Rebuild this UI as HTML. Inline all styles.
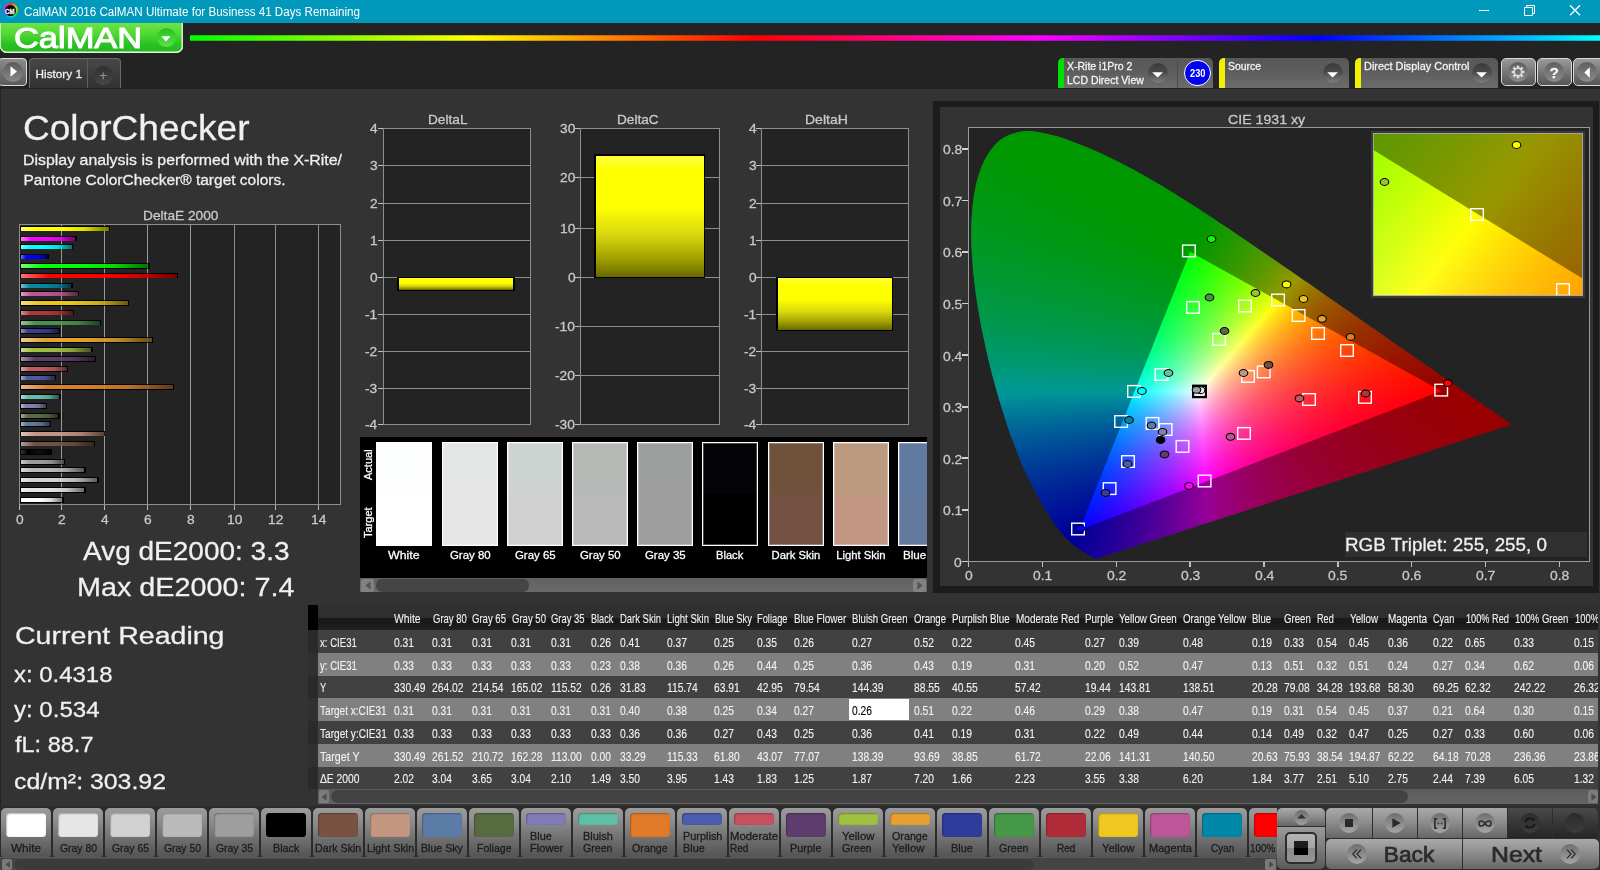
<!DOCTYPE html>
<html lang="en"><head><meta charset="utf-8"><title>CalMAN 2016 CalMAN Ultimate for Business</title>
<style>
html,body{margin:0;padding:0;background:#333}
body{width:1600px;height:870px;position:relative;overflow:hidden;font-family:"Liberation Sans",sans-serif;color:#fff}
#app{position:absolute;left:0;top:0;width:1600px;height:870px;overflow:hidden;background:#333;will-change:transform}
div,.a{position:absolute}
svg{display:block;overflow:visible}
.t{position:absolute;white-space:nowrap;line-height:1;transform-origin:0 0;color:#fff;-webkit-text-stroke:.28px}
#tbl .t{-webkit-text-stroke:.12px}
</style></head>
<body>
<div id="app">
<div style="left:0;top:89px;width:1px;height:781px;background:#242424"></div>
<div style="left:0px;top:0px;width:1600px;height:23px;background:#0099bc;"></div>
<div style="left:2.5px;top:3px;width:15px;height:15px;border-radius:50%;background:conic-gradient(#f33,#fc0,#3d3,#0cf,#36f,#c3f,#f33);"></div>
<div style="left:4.5px;top:5px;width:11px;height:11px;border-radius:50%;background:#000;"></div>
<span class="t" style="left:5.35px;top:8px;font-size:7px;transform:scaleX(0.8723);font-weight:700;">CM</span>
<span class="t" style="left:23.60px;top:6px;font-size:12px;transform:scaleX(0.9670);-webkit-text-stroke:0;">CalMAN 2016 CalMAN Ultimate for Business 41 Days Remaining</span>
<svg class="a" style="left:1470px;top:0" width="130" height="23" viewBox="0 0 130 23" fill="none" stroke="#fff" stroke-width="1"><path d="M9 10.5h10"/><path d="M54.5 7.5h8v8h-8z"/><path d="M56.5 7.5v-2h8v8h-2"/><path d="M100 5.2l10 10M110 5.2l-10 10" stroke-width="1.25"/></svg>
<div style="left:0px;top:23px;width:1600px;height:66px;background:#232323;"></div>
<div style="left:190px;top:35px;width:1410px;height:6px;background:linear-gradient(90deg,#00ff00 0%,#80ff00 10%,#ffff00 20%,#ff8000 30%,#ff0000 40%,#ff0080 50%,#ff00ff 60%,#8000ff 70%,#0000ff 80%,#0080ff 90%,#00ffff 100%);border-radius:0;box-shadow:none;"></div>
<div style="left:190px;top:34px;width:1410px;height:2px;background:linear-gradient(#232323,rgba(35,35,35,0));"></div>
<div style="left:190px;top:40px;width:1410px;height:2px;background:linear-gradient(rgba(35,35,35,0),#232323);"></div>
<div style="left:0px;top:23px;width:183px;height:30px;background:linear-gradient(#6fe345 0%,#52d934 35%,#2bc322 70%,#1fb71d 100%);border-radius:0 0 7px 7px;box-shadow:inset 0 -1.5px 0 #e6f5e0,inset -1.5px 0 0 #d0f0c8,inset 1px 0 0 #d0f0c8;"></div>
<span class="t" style="left:13.70px;top:23px;font-size:30px;transform:scaleX(1.1478);-webkit-text-stroke:1.1px #fff;text-shadow:0 1px 1px rgba(0,0,0,.2);">CalMAN</span>
<div style="left:156.5px;top:28px;width:19px;height:19px;border-radius:50%;background:linear-gradient(#1fc31f,#5fe04a);"></div>
<svg class="a" style="left:161px;top:35.5px" width="10" height="6" viewBox="0 0 10 6"><path d="M0.4 0.3h9.2L5 5.6z" fill="#fff"/></svg>
<div style="left:-2px;top:58px;width:29px;height:28px;border-radius:4px;background:linear-gradient(#8c8c8c,#5a5a5a);border:1px solid #ddd;box-sizing:border-box;box-shadow:0 0 0 1px #222;"></div>
<div style="left:3px;top:62px;width:20px;height:20px;border-radius:50%;background:linear-gradient(#5a5a5a,#8a8a8a);"></div>
<svg class="a" style="left:9.5px;top:66px" width="8" height="11" viewBox="0 0 8 11"><path d="M0.5 0.3L7 5.5L0.5 10.7z" fill="#fff"/></svg>
<div style="left:28.8px;top:58px;width:92.2px;height:30px;border-radius:4px 4px 0 0;background:linear-gradient(#484848,#333 90%);border:1px solid #6a6a6a;border-bottom:0;box-sizing:border-box;"></div>
<div style="left:86.9px;top:59px;width:1px;height:29px;background:#5e5e5e;"></div>
<span class="t" style="left:35.60px;top:68px;font-size:11.75px;color:#f2f2f2;">History 1</span>
<div style="left:94px;top:65.5px;width:19px;height:19px;border-radius:50%;background:linear-gradient(#2f2f2f,#474747);"></div>
<span class="t" style="left:99.50px;top:69px;font-size:13px;color:#8a8a8a;">+</span>
<div style="left:1058px;top:58px;width:154.5px;height:30px;border-radius:5px 5px 0 0;background:linear-gradient(#585858,#5c5c5c 40%,#6c6c6c);overflow:hidden;"><div class="a" style="left:0;top:0;width:5.5px;height:30px;background:#00e000"></div></div><span class="t" style="left:1067.00px;top:61px;font-size:10.5px;color:#f4f4f4;">X-Rite i1Pro 2</span><span class="t" style="left:1067.00px;top:75px;font-size:10.5px;color:#f4f4f4;">LCD Direct View</span><div style="left:1147.5px;top:63px;width:20px;height:20px;border-radius:50%;background:linear-gradient(#3a3a3a,#4a4a4a 45%,#7e7e7e);"></div><svg class="a" style="left:1151.9px;top:71.7px" width="11.2" height="5.6" viewBox="0 0 11.2 5.6"><path d="M0.2 0.2h10.8L5.6 5.5z" fill="#fff"/></svg>
<div style="left:1176.5px;top:61px;width:1.5px;height:27px;background:#4c4c4c;"></div>
<div style="left:1184.3px;top:59.9px;width:26.4px;height:26.4px;border-radius:50%;background:#0000f2;border:1.1px solid #fff;box-sizing:border-box;"></div>
<span class="t" style="left:1189.90px;top:69px;font-size:10px;transform:scaleX(0.9228);font-weight:700;-webkit-text-stroke:0;">230</span>
<div style="left:1219px;top:58px;width:129.5px;height:30px;border-radius:5px 5px 0 0;background:linear-gradient(#585858,#5c5c5c 40%,#6c6c6c);overflow:hidden;"><div class="a" style="left:0;top:0;width:5.5px;height:30px;background:#f2f200"></div></div><span class="t" style="left:1228.00px;top:61px;font-size:10.5px;transform:scaleX(0.9915);color:#f4f4f4;">Source</span><div style="left:1322.5px;top:63px;width:20px;height:20px;border-radius:50%;background:linear-gradient(#3a3a3a,#4a4a4a 45%,#7e7e7e);"></div><svg class="a" style="left:1326.9px;top:71.7px" width="11.2" height="5.6" viewBox="0 0 11.2 5.6"><path d="M0.2 0.2h10.8L5.6 5.5z" fill="#fff"/></svg>
<div style="left:1355px;top:58px;width:142.5px;height:30px;border-radius:5px 5px 0 0;background:linear-gradient(#585858,#5c5c5c 40%,#6c6c6c);overflow:hidden;"><div class="a" style="left:0;top:0;width:5.5px;height:30px;background:#f2f200"></div></div><span class="t" style="left:1364.00px;top:61px;font-size:11px;transform:scaleX(0.9918);color:#f4f4f4;">Direct Display Control</span><div style="left:1472px;top:63px;width:20px;height:20px;border-radius:50%;background:linear-gradient(#3a3a3a,#4a4a4a 45%,#7e7e7e);"></div><svg class="a" style="left:1476.4px;top:71.7px" width="11.2" height="5.6" viewBox="0 0 11.2 5.6"><path d="M0.2 0.2h10.8L5.6 5.5z" fill="#fff"/></svg>
<div style="left:1501px;top:58px;width:34.5px;height:28px;border-radius:5px;background:linear-gradient(#9a9a9a,#555);border:1px solid #d8d8d8;box-sizing:border-box;"></div><div style="left:1508.25px;top:62px;width:20px;height:20px;border-radius:50%;background:linear-gradient(#5e5e5e,#8c8c8c);"></div>
<svg class="a" style="left:1510px;top:64px" width="16" height="16" viewBox="-8 -8 16 16"><g fill="#ddd"><rect x="-1.25" y="-6.4" width="2.5" height="2.6" transform="rotate(0)"/><rect x="-1.25" y="-6.4" width="2.5" height="2.6" transform="rotate(45)"/><rect x="-1.25" y="-6.4" width="2.5" height="2.6" transform="rotate(90)"/><rect x="-1.25" y="-6.4" width="2.5" height="2.6" transform="rotate(135)"/><rect x="-1.25" y="-6.4" width="2.5" height="2.6" transform="rotate(180)"/><rect x="-1.25" y="-6.4" width="2.5" height="2.6" transform="rotate(225)"/><rect x="-1.25" y="-6.4" width="2.5" height="2.6" transform="rotate(270)"/><rect x="-1.25" y="-6.4" width="2.5" height="2.6" transform="rotate(315)"/></g><circle r="3.7" fill="none" stroke="#ddd" stroke-width="1.5"/></svg>
<div style="left:1537px;top:58px;width:34.5px;height:28px;border-radius:5px;background:linear-gradient(#9a9a9a,#555);border:1px solid #d8d8d8;box-sizing:border-box;"></div><div style="left:1544.25px;top:62px;width:20px;height:20px;border-radius:50%;background:linear-gradient(#5e5e5e,#8c8c8c);"></div>
<span class="t" style="left:1549.47px;top:65px;font-size:15.5px;color:#f4f4f4;font-weight:700;">?</span>
<div style="left:1573px;top:58px;width:37px;height:28px;border-radius:5px;background:linear-gradient(#9a9a9a,#555);border:1px solid #d8d8d8;box-sizing:border-box;"></div><div style="left:1577px;top:62px;width:20px;height:20px;border-radius:50%;background:linear-gradient(#5e5e5e,#8c8c8c);"></div>
<svg class="a" style="left:1583.6px;top:66.6px" width="6" height="11" viewBox="0 0 6 11"><path d="M5.8 0.3L0.3 5.5L5.8 10.7z" fill="#fff"/></svg>
<span class="t" style="left:23.30px;top:111px;font-size:35.75px;transform:scaleX(1.0363);color:#f0f0f0;">ColorChecker</span>
<span class="t" style="left:23.40px;top:152px;font-size:15.5px;transform:scaleX(1.0258);color:#f0f0f0;">Display analysis is performed with the X-Rite/</span>
<span class="t" style="left:23.40px;top:172px;font-size:15.5px;color:#f0f0f0;">Pantone ColorChecker® target colors.</span>
<span class="t" style="left:142.55px;top:209px;font-size:13.5px;transform:scaleX(1.0160);color:#c9c9c9;">DeltaE 2000</span>
<div style="left:19px;top:224px;width:322px;height:281px;background:#232323;border:1px solid #8e8e8e;box-sizing:border-box;"></div>
<div style="left:61px;top:225px;width:1px;height:279px;background:#8e8e8e;"></div>
<div style="left:104px;top:225px;width:1px;height:279px;background:#8e8e8e;"></div>
<div style="left:147px;top:225px;width:1px;height:279px;background:#8e8e8e;"></div>
<div style="left:190px;top:225px;width:1px;height:279px;background:#8e8e8e;"></div>
<div style="left:234px;top:225px;width:1px;height:279px;background:#8e8e8e;"></div>
<div style="left:275px;top:225px;width:1px;height:279px;background:#8e8e8e;"></div>
<div style="left:318px;top:225px;width:1px;height:279px;background:#8e8e8e;"></div>
<div style="left:19px;top:505px;width:1.2px;height:5px;background:#b8b8b8;"></div>
<span class="t" style="left:15.97px;top:513px;font-size:13px;transform:scaleX(1.0600);color:#c9c9c9;">0</span>
<div style="left:61px;top:505px;width:1.2px;height:5px;background:#b8b8b8;"></div>
<span class="t" style="left:57.97px;top:513px;font-size:13px;transform:scaleX(1.0600);color:#c9c9c9;">2</span>
<div style="left:104px;top:505px;width:1.2px;height:5px;background:#b8b8b8;"></div>
<span class="t" style="left:100.97px;top:513px;font-size:13px;transform:scaleX(1.0600);color:#c9c9c9;">4</span>
<div style="left:147px;top:505px;width:1.2px;height:5px;background:#b8b8b8;"></div>
<span class="t" style="left:143.97px;top:513px;font-size:13px;transform:scaleX(1.0600);color:#c9c9c9;">6</span>
<div style="left:190px;top:505px;width:1.2px;height:5px;background:#b8b8b8;"></div>
<span class="t" style="left:186.97px;top:513px;font-size:13px;transform:scaleX(1.0600);color:#c9c9c9;">8</span>
<div style="left:234px;top:505px;width:1.2px;height:5px;background:#b8b8b8;"></div>
<span class="t" style="left:227.13px;top:513px;font-size:13px;transform:scaleX(1.0600);color:#c9c9c9;">10</span>
<div style="left:275px;top:505px;width:1.2px;height:5px;background:#b8b8b8;"></div>
<span class="t" style="left:268.13px;top:513px;font-size:13px;transform:scaleX(1.0600);color:#c9c9c9;">12</span>
<div style="left:318px;top:505px;width:1.2px;height:5px;background:#b8b8b8;"></div>
<span class="t" style="left:311.13px;top:513px;font-size:13px;transform:scaleX(1.0600);color:#c9c9c9;">14</span>
<div style="left:20px;top:225.55px;width:90.27px;height:5.9px;background:#000;"></div>
<div style="left:20.5px;top:226.5px;width:88.47px;height:4px;background:linear-gradient(90deg,#ffff73 0,#ffff00 18%,#ffff00 45%,#e0e000 72%,#737300 100%);"></div>
<div style="left:20px;top:235.55px;width:56.537px;height:5.9px;background:#000;"></div>
<div style="left:20.5px;top:236.5px;width:54.737px;height:4px;background:linear-gradient(90deg,#ff73ff 0,#ff00ff 18%,#ff00ff 45%,#e000e0 72%,#730073 100%);"></div>
<div style="left:20px;top:243.55px;width:52.9075px;height:5.9px;background:#000;"></div>
<div style="left:20.5px;top:244.5px;width:51.1075px;height:4px;background:linear-gradient(90deg,#73ffff 0,#00ffff 18%,#00ffff 45%,#00e0e0 72%,#007373 100%);"></div>
<div style="left:20px;top:253.55px;width:28.782px;height:5.9px;background:#000;"></div>
<div style="left:20.5px;top:254.5px;width:26.982px;height:4px;background:linear-gradient(90deg,#7373ff 0,#0000ff 18%,#0000ff 45%,#0000e0 72%,#000073 100%);"></div>
<div style="left:20px;top:262.95px;width:129.768px;height:5.9px;background:#000;"></div>
<div style="left:20.5px;top:263.9px;width:127.968px;height:4px;background:linear-gradient(90deg,#73ff73 0,#00ff00 18%,#00ff00 45%,#00e000 72%,#007300 100%);"></div>
<div style="left:20px;top:272.55px;width:158.376px;height:5.9px;background:#000;"></div>
<div style="left:20.5px;top:273.5px;width:156.577px;height:4px;background:linear-gradient(90deg,#ff7373 0,#ff0000 18%,#ff0000 45%,#e00000 72%,#730000 100%);"></div>
<div style="left:20px;top:282.55px;width:52.694px;height:5.9px;background:#000;"></div>
<div style="left:20.5px;top:283.5px;width:50.894px;height:4px;background:linear-gradient(90deg,#77bccb 0,#0885a1 18%,#0885a1 45%,#07758e 72%,#043c48 100%);"></div>
<div style="left:20px;top:290.55px;width:59.3125px;height:5.9px;background:#000;"></div>
<div style="left:20.5px;top:291.5px;width:57.5125px;height:4px;background:linear-gradient(90deg,#daa2c5 0,#bb5695 18%,#bb5695 45%,#a54c83 72%,#542743 100%);"></div>
<div style="left:20px;top:300.15px;width:109.485px;height:5.9px;background:#000;"></div>
<div style="left:20.5px;top:301.1px;width:107.685px;height:4px;background:linear-gradient(90deg,#f2e084 0,#e7c71f 18%,#e7c71f 45%,#cbaf1b 72%,#685a0e 100%);"></div>
<div style="left:20px;top:309.55px;width:54.1885px;height:5.9px;background:#000;"></div>
<div style="left:20.5px;top:310.5px;width:52.3885px;height:4px;background:linear-gradient(90deg,#d39094 0,#af363c 18%,#af363c 45%,#9a3035 72%,#4f181b 100%);"></div>
<div style="left:20px;top:319.55px;width:81.0895px;height:5.9px;background:#000;"></div>
<div style="left:20.5px;top:320.5px;width:79.2895px;height:4px;background:linear-gradient(90deg,#99c49b 0,#469449 18%,#469449 45%,#3e8240 72%,#204321 100%);"></div>
<div style="left:20px;top:327.65px;width:39.884px;height:5.9px;background:#000;"></div>
<div style="left:20.5px;top:328.6px;width:38.084px;height:4px;background:linear-gradient(90deg,#9294c5 0,#383d96 18%,#383d96 45%,#313684 72%,#191b44 100%);"></div>
<div style="left:20px;top:337.45px;width:132.97px;height:5.9px;background:#000;"></div>
<div style="left:20.5px;top:338.4px;width:131.17px;height:4px;background:linear-gradient(90deg,#eecc8c 0,#e0a32e 18%,#e0a32e 45%,#c58f28 72%,#654915 100%);"></div>
<div style="left:20px;top:346.55px;width:72.763px;height:5.9px;background:#000;"></div>
<div style="left:20.5px;top:347.5px;width:70.963px;height:4px;background:linear-gradient(90deg,#c9da96 0,#9dbc40 18%,#9dbc40 45%,#8aa538 72%,#47551d 100%);"></div>
<div style="left:20px;top:356.45px;width:76.3925px;height:5.9px;background:#000;"></div>
<div style="left:20.5px;top:357.4px;width:74.5925px;height:4px;background:linear-gradient(90deg,#a694ae 0,#5e3c6c 18%,#5e3c6c 45%,#53355f 72%,#2a1b31 100%);"></div>
<div style="left:20px;top:366.05px;width:48.2105px;height:5.9px;background:#000;"></div>
<div style="left:20.5px;top:367px;width:46.4105px;height:4px;background:linear-gradient(90deg,#dda4a9 0,#c15a63 18%,#c15a63 45%,#aa4f57 72%,#57282d 100%);"></div>
<div style="left:20px;top:374.55px;width:36.041px;height:5.9px;background:#000;"></div>
<div style="left:20.5px;top:375.5px;width:34.241px;height:4px;background:linear-gradient(90deg,#9fa5ce 0,#505ba6 18%,#505ba6 45%,#465092 72%,#24294b 100%);"></div>
<div style="left:20px;top:384.15px;width:154.32px;height:5.9px;background:#000;"></div>
<div style="left:20.5px;top:385.1px;width:152.52px;height:4px;background:linear-gradient(90deg,#e8b88b 0,#d67e2c 18%,#d67e2c 45%,#bc6f27 72%,#603914 100%);"></div>
<div style="left:20px;top:393.55px;width:40.5245px;height:5.9px;background:#000;"></div>
<div style="left:20.5px;top:394.5px;width:38.7245px;height:4px;background:linear-gradient(90deg,#abdbd0 0,#67bdaa 18%,#67bdaa 45%,#5ba696 72%,#2e554c 100%);"></div>
<div style="left:20px;top:403.3px;width:27.2875px;height:5.9px;background:#000;"></div>
<div style="left:20.5px;top:404.25px;width:25.4875px;height:4px;background:linear-gradient(90deg,#bcb9d4 0,#8580b1 18%,#8580b1 45%,#75719c 72%,#3c3a50 100%);"></div>
<div style="left:20px;top:412.65px;width:39.6705px;height:5.9px;background:#000;"></div>
<div style="left:20.5px;top:413.6px;width:37.8705px;height:4px;background:linear-gradient(90deg,#a3ae98 0,#576c43 18%,#576c43 45%,#4d5f3b 72%,#27311e 100%);"></div>
<div style="left:20px;top:421.45px;width:31.1305px;height:5.9px;background:#000;"></div>
<div style="left:20.5px;top:422.4px;width:29.3305px;height:4px;background:linear-gradient(90deg,#a9b6c9 0,#627a9d 18%,#627a9d 45%,#566b8a 72%,#2c3747 100%);"></div>
<div style="left:20px;top:430.55px;width:84.9325px;height:5.9px;background:#000;"></div>
<div style="left:20.5px;top:431.5px;width:83.1325px;height:4px;background:linear-gradient(90deg,#ddc5ba 0,#c29682 18%,#c29682 45%,#ab8472 72%,#57443a 100%);"></div>
<div style="left:20px;top:440.55px;width:75.325px;height:5.9px;background:#000;"></div>
<div style="left:20.5px;top:441.5px;width:73.525px;height:4px;background:linear-gradient(90deg,#b2a098 0,#735244 18%,#735244 45%,#65483c 72%,#34251f 100%);"></div>
<div style="left:20px;top:449.3px;width:32.4115px;height:5.9px;background:#000;"></div>
<div style="left:20.5px;top:450.25px;width:30.6115px;height:4px;background:linear-gradient(90deg,#3a3a3a,#000 22%,#111 60%,#000);"></div>
<div style="left:20px;top:459.3px;width:45.435px;height:5.9px;background:#000;"></div>
<div style="left:20.5px;top:460.25px;width:43.635px;height:4px;background:linear-gradient(90deg,#cacaca 0,#9e9e9e 18%,#9e9e9e 45%,#8b8b8b 72%,#474747 100%);"></div>
<div style="left:20px;top:467.45px;width:65.504px;height:5.9px;background:#000;"></div>
<div style="left:20.5px;top:468.4px;width:63.704px;height:4px;background:linear-gradient(90deg,#d9d9d9 0,#bababa 18%,#bababa 45%,#a4a4a4 72%,#545454 100%);"></div>
<div style="left:20px;top:477.45px;width:78.5275px;height:5.9px;background:#000;"></div>
<div style="left:20.5px;top:478.4px;width:76.7275px;height:4px;background:linear-gradient(90deg,#e6e6e6 0,#d2d2d2 18%,#d2d2d2 45%,#b9b9b9 72%,#5e5e5e 100%);"></div>
<div style="left:20px;top:486.8px;width:65.504px;height:5.9px;background:#000;"></div>
<div style="left:20.5px;top:487.75px;width:63.704px;height:4px;background:linear-gradient(90deg,#f1f1f1 0,#e6e6e6 18%,#e6e6e6 45%,#cacaca 72%,#676767 100%);"></div>
<div style="left:20px;top:496.65px;width:43.727px;height:5.9px;background:#000;"></div>
<div style="left:20.5px;top:497.6px;width:41.927px;height:4px;background:linear-gradient(90deg,#ffffff 0,#ffffff 18%,#ffffff 45%,#e0e0e0 72%,#737373 100%);"></div>
<div style="left:61px;top:225px;width:1px;height:279px;background:rgba(255,255,255,.10);"></div>
<div style="left:104px;top:225px;width:1px;height:279px;background:rgba(255,255,255,.10);"></div>
<div style="left:147px;top:225px;width:1px;height:279px;background:rgba(255,255,255,.10);"></div>
<div style="left:190px;top:225px;width:1px;height:279px;background:rgba(255,255,255,.10);"></div>
<span class="t" style="left:83.20px;top:538px;font-size:26.5px;transform:scaleX(1.0564);color:#f0f0f0;">Avg dE2000: 3.3</span>
<span class="t" style="left:77.30px;top:574px;font-size:26.5px;transform:scaleX(1.0851);color:#f0f0f0;">Max dE2000: 7.4</span>
<span class="t" style="left:14.60px;top:624px;font-size:24.75px;transform:scaleX(1.1536);color:#f0f0f0;">Current Reading</span>
<span class="t" style="left:14.40px;top:663px;font-size:22.75px;transform:scaleX(1.0522);color:#f0f0f0;">x: 0.4318</span>
<span class="t" style="left:14.40px;top:698px;font-size:22.75px;transform:scaleX(1.0562);color:#f0f0f0;">y: 0.534</span>
<span class="t" style="left:14.60px;top:733px;font-size:22.75px;transform:scaleX(1.0342);color:#f0f0f0;">fL: 88.7</span>
<span class="t" style="left:14.40px;top:770px;font-size:22.75px;transform:scaleX(1.0927);color:#f0f0f0;">cd/m²: 303.92</span>
<div style="left:383px;top:128px;width:148px;height:297px;background:#232323;border:1px solid #8e8e8e;box-sizing:border-box;"></div>
<div style="left:384px;top:165px;width:146px;height:1px;background:#8e8e8e;"></div>
<div style="left:384px;top:203px;width:146px;height:1px;background:#8e8e8e;"></div>
<div style="left:384px;top:240px;width:146px;height:1px;background:#8e8e8e;"></div>
<div style="left:384px;top:277px;width:146px;height:1px;background:#8e8e8e;"></div>
<div style="left:384px;top:314px;width:146px;height:1px;background:#8e8e8e;"></div>
<div style="left:384px;top:351px;width:146px;height:1px;background:#8e8e8e;"></div>
<div style="left:384px;top:388px;width:146px;height:1px;background:#8e8e8e;"></div>
<div style="left:378px;top:128px;width:5px;height:1.2px;background:#c0c0c0;"></div>
<span class="t" style="left:369.63px;top:122px;font-size:13px;transform:scaleX(1.0600);color:#c9c9c9;">4</span>
<div style="left:378px;top:165px;width:5px;height:1.2px;background:#c0c0c0;"></div>
<span class="t" style="left:369.63px;top:159px;font-size:13px;transform:scaleX(1.0600);color:#c9c9c9;">3</span>
<div style="left:378px;top:203px;width:5px;height:1.2px;background:#c0c0c0;"></div>
<span class="t" style="left:369.63px;top:197px;font-size:13px;transform:scaleX(1.0600);color:#c9c9c9;">2</span>
<div style="left:378px;top:240px;width:5px;height:1.2px;background:#c0c0c0;"></div>
<span class="t" style="left:369.63px;top:234px;font-size:13px;transform:scaleX(1.0600);color:#c9c9c9;">1</span>
<div style="left:378px;top:277px;width:5px;height:1.2px;background:#c0c0c0;"></div>
<span class="t" style="left:369.63px;top:271px;font-size:13px;transform:scaleX(1.0600);color:#c9c9c9;">0</span>
<div style="left:378px;top:314px;width:5px;height:1.2px;background:#c0c0c0;"></div>
<span class="t" style="left:365.04px;top:308px;font-size:13px;transform:scaleX(1.0600);color:#c9c9c9;">-1</span>
<div style="left:378px;top:351px;width:5px;height:1.2px;background:#c0c0c0;"></div>
<span class="t" style="left:365.04px;top:345px;font-size:13px;transform:scaleX(1.0600);color:#c9c9c9;">-2</span>
<div style="left:378px;top:388px;width:5px;height:1.2px;background:#c0c0c0;"></div>
<span class="t" style="left:365.04px;top:382px;font-size:13px;transform:scaleX(1.0600);color:#c9c9c9;">-3</span>
<div style="left:378px;top:424px;width:5px;height:1.2px;background:#c0c0c0;"></div>
<span class="t" style="left:365.04px;top:418px;font-size:13px;transform:scaleX(1.0600);color:#c9c9c9;">-4</span>
<span class="t" style="left:428.45px;top:113px;font-size:13px;transform:scaleX(1.0511);color:#c9c9c9;">DeltaL</span>
<div style="left:397.2px;top:276.6px;width:117.8px;height:14.3px;background:#000;"></div>
<div style="left:398.7px;top:278px;width:114.8px;height:11.7px;background:linear-gradient(#ffff40 0,#ffff00 12%,#ffff00 42%,#d8d810 65%,#a0a000 85%,#686800 100%);"></div>
<div style="left:580px;top:128px;width:140px;height:297px;background:#232323;border:1px solid #8e8e8e;box-sizing:border-box;"></div>
<div style="left:581px;top:177px;width:138px;height:1px;background:#8e8e8e;"></div>
<div style="left:581px;top:228px;width:138px;height:1px;background:#8e8e8e;"></div>
<div style="left:581px;top:277px;width:138px;height:1px;background:#8e8e8e;"></div>
<div style="left:581px;top:326px;width:138px;height:1px;background:#8e8e8e;"></div>
<div style="left:581px;top:375px;width:138px;height:1px;background:#8e8e8e;"></div>
<div style="left:575px;top:128px;width:5px;height:1.2px;background:#c0c0c0;"></div>
<span class="t" style="left:559.96px;top:122px;font-size:13px;transform:scaleX(1.0600);color:#c9c9c9;">30</span>
<div style="left:575px;top:177px;width:5px;height:1.2px;background:#c0c0c0;"></div>
<span class="t" style="left:559.96px;top:171px;font-size:13px;transform:scaleX(1.0600);color:#c9c9c9;">20</span>
<div style="left:575px;top:228px;width:5px;height:1.2px;background:#c0c0c0;"></div>
<span class="t" style="left:559.96px;top:222px;font-size:13px;transform:scaleX(1.0600);color:#c9c9c9;">10</span>
<div style="left:575px;top:277px;width:5px;height:1.2px;background:#c0c0c0;"></div>
<span class="t" style="left:567.63px;top:271px;font-size:13px;transform:scaleX(1.0600);color:#c9c9c9;">0</span>
<div style="left:575px;top:326px;width:5px;height:1.2px;background:#c0c0c0;"></div>
<span class="t" style="left:555.38px;top:320px;font-size:13px;transform:scaleX(1.0600);color:#c9c9c9;">-10</span>
<div style="left:575px;top:375px;width:5px;height:1.2px;background:#c0c0c0;"></div>
<span class="t" style="left:555.38px;top:369px;font-size:13px;transform:scaleX(1.0600);color:#c9c9c9;">-20</span>
<div style="left:575px;top:424px;width:5px;height:1.2px;background:#c0c0c0;"></div>
<span class="t" style="left:555.38px;top:418px;font-size:13px;transform:scaleX(1.0600);color:#c9c9c9;">-30</span>
<span class="t" style="left:616.50px;top:113px;font-size:13px;transform:scaleX(1.0465);color:#c9c9c9;">DeltaC</span>
<div style="left:594px;top:154.1px;width:111.3px;height:123.8px;background:#000;"></div>
<div style="left:595.5px;top:155.5px;width:108.3px;height:121.2px;background:linear-gradient(#ffff40 0,#ffff00 12%,#ffff00 42%,#d8d810 65%,#a0a000 85%,#686800 100%);"></div>
<div style="left:761px;top:128px;width:148px;height:297px;background:#232323;border:1px solid #8e8e8e;box-sizing:border-box;"></div>
<div style="left:762px;top:165px;width:146px;height:1px;background:#8e8e8e;"></div>
<div style="left:762px;top:203px;width:146px;height:1px;background:#8e8e8e;"></div>
<div style="left:762px;top:240px;width:146px;height:1px;background:#8e8e8e;"></div>
<div style="left:762px;top:277px;width:146px;height:1px;background:#8e8e8e;"></div>
<div style="left:762px;top:314px;width:146px;height:1px;background:#8e8e8e;"></div>
<div style="left:762px;top:351px;width:146px;height:1px;background:#8e8e8e;"></div>
<div style="left:762px;top:388px;width:146px;height:1px;background:#8e8e8e;"></div>
<div style="left:756px;top:128px;width:5px;height:1.2px;background:#c0c0c0;"></div>
<span class="t" style="left:748.63px;top:122px;font-size:13px;transform:scaleX(1.0600);color:#c9c9c9;">4</span>
<div style="left:756px;top:165px;width:5px;height:1.2px;background:#c0c0c0;"></div>
<span class="t" style="left:748.63px;top:159px;font-size:13px;transform:scaleX(1.0600);color:#c9c9c9;">3</span>
<div style="left:756px;top:203px;width:5px;height:1.2px;background:#c0c0c0;"></div>
<span class="t" style="left:748.63px;top:197px;font-size:13px;transform:scaleX(1.0600);color:#c9c9c9;">2</span>
<div style="left:756px;top:240px;width:5px;height:1.2px;background:#c0c0c0;"></div>
<span class="t" style="left:748.63px;top:234px;font-size:13px;transform:scaleX(1.0600);color:#c9c9c9;">1</span>
<div style="left:756px;top:277px;width:5px;height:1.2px;background:#c0c0c0;"></div>
<span class="t" style="left:748.63px;top:271px;font-size:13px;transform:scaleX(1.0600);color:#c9c9c9;">0</span>
<div style="left:756px;top:314px;width:5px;height:1.2px;background:#c0c0c0;"></div>
<span class="t" style="left:744.04px;top:308px;font-size:13px;transform:scaleX(1.0600);color:#c9c9c9;">-1</span>
<div style="left:756px;top:351px;width:5px;height:1.2px;background:#c0c0c0;"></div>
<span class="t" style="left:744.04px;top:345px;font-size:13px;transform:scaleX(1.0600);color:#c9c9c9;">-2</span>
<div style="left:756px;top:388px;width:5px;height:1.2px;background:#c0c0c0;"></div>
<span class="t" style="left:744.04px;top:382px;font-size:13px;transform:scaleX(1.0600);color:#c9c9c9;">-3</span>
<div style="left:756px;top:424px;width:5px;height:1.2px;background:#c0c0c0;"></div>
<span class="t" style="left:744.04px;top:418px;font-size:13px;transform:scaleX(1.0600);color:#c9c9c9;">-4</span>
<span class="t" style="left:804.80px;top:113px;font-size:13px;transform:scaleX(1.0767);color:#c9c9c9;">DeltaH</span>
<div style="left:776px;top:276.6px;width:117.1px;height:54.1px;background:#000;"></div>
<div style="left:777.5px;top:278px;width:114.1px;height:51.5px;background:linear-gradient(#ffff40 0,#ffff00 12%,#ffff00 42%,#d8d810 65%,#a0a000 85%,#686800 100%);"></div>
<div style="left:360px;top:437px;width:567px;height:155px;background:#000;overflow:hidden;"><div class="a" style="left:16px;top:5px;width:56px;height:104px;box-sizing:border-box;border:1px solid #fff;background:linear-gradient(#fdfffe 0,#fdfffe 50%,#ffffff 50%,#ffffff 100%);box-shadow:inset 0 0 0 1px rgba(255,255,255,.28)"></div><span class="t" style="left:28.15px;top:112px;font-size:11.75px;transform:scaleX(1.0550);">White</span><div class="a" style="left:82px;top:5px;width:56px;height:104px;box-sizing:border-box;border:1px solid #fff;background:linear-gradient(#e3e6e4 0,#e3e6e4 50%,#e5e5e5 50%,#e5e5e5 100%);box-shadow:inset 0 0 0 1px rgba(255,255,255,.28)"></div><span class="t" style="left:89.70px;top:113px;font-size:11.5px;transform:scaleX(0.9921);">Gray 80</span><div class="a" style="left:147px;top:5px;width:56px;height:104px;box-sizing:border-box;border:1px solid #fff;background:linear-gradient(#cdd3d0 0,#cdd3d0 50%,#d0d0d0 50%,#d0d0d0 100%);box-shadow:inset 0 0 0 1px rgba(255,255,255,.28)"></div><span class="t" style="left:154.70px;top:113px;font-size:11.5px;transform:scaleX(0.9921);">Gray 65</span><div class="a" style="left:212px;top:5px;width:56px;height:104px;box-sizing:border-box;border:1px solid #fff;background:linear-gradient(#b6bab7 0,#b6bab7 50%,#b9b9b9 50%,#b9b9b9 100%);box-shadow:inset 0 0 0 1px rgba(255,255,255,.28)"></div><span class="t" style="left:219.70px;top:113px;font-size:11.5px;transform:scaleX(0.9921);">Gray 50</span><div class="a" style="left:277px;top:5px;width:56px;height:104px;box-sizing:border-box;border:1px solid #fff;background:linear-gradient(#9b9e9c 0,#9b9e9c 50%,#9d9d9d 50%,#9d9d9d 100%);box-shadow:inset 0 0 0 1px rgba(255,255,255,.28)"></div><span class="t" style="left:284.70px;top:113px;font-size:11.5px;transform:scaleX(0.9921);">Gray 35</span><div class="a" style="left:342px;top:5px;width:56px;height:104px;box-sizing:border-box;border:1px solid #fff;background:linear-gradient(#040408 0,#040408 50%,#000000 50%,#000000 100%);box-shadow:inset 0 0 0 1px rgba(255,255,255,.28)"></div><span class="t" style="left:356.40px;top:113px;font-size:11px;transform:scaleX(1.0109);">Black</span><div class="a" style="left:408px;top:5px;width:56px;height:104px;box-sizing:border-box;border:1px solid #fff;background:linear-gradient(#70513b 0,#70513b 50%,#735244 50%,#735244 100%);box-shadow:inset 0 0 0 1px rgba(255,255,255,.28)"></div><span class="t" style="left:411.60px;top:113px;font-size:11.25px;">Dark Skin</span><div class="a" style="left:473px;top:5px;width:56px;height:104px;box-sizing:border-box;border:1px solid #fff;background:linear-gradient(#bc9a80 0,#bc9a80 50%,#c29682 50%,#c29682 100%);box-shadow:inset 0 0 0 1px rgba(255,255,255,.28)"></div><span class="t" style="left:476.20px;top:113px;font-size:11.25px;">Light Skin</span><div class="a" style="left:538px;top:5px;width:56px;height:104px;box-sizing:border-box;border:1px solid #fff;background:linear-gradient(#5f7ba2 0,#5f7ba2 50%,#627a9d 50%,#627a9d 100%);box-shadow:inset 0 0 0 1px rgba(255,255,255,.28)"></div><span class="t" style="left:543.00px;top:112px;font-size:11.75px;transform:scaleX(0.9919);">Blue Sky</span><span class="t" style="left:2.3px;top:43.2px;font-size:11.6px;transform:rotate(-90deg) scaleX(0.95);transform-origin:0 0;">Actual</span><span class="t" style="left:2.3px;top:101.2px;font-size:11.6px;transform:rotate(-90deg) scaleX(0.95);transform-origin:0 0;">Target</span><div class="a" style="left:0;top:141px;width:567px;height:14px;background:linear-gradient(#606060,#6a6a6a);"></div><div class="a" style="left:16px;top:142px;width:153px;height:12.5px;border-radius:6px;background:#454545;"></div><div class="a" style="left:1px;top:141.5px;width:13px;height:13px;border-radius:2.5px;background:#828282;"></div><svg class="a" style="left:4.5px;top:143.5px" width="6" height="9" viewBox="0 0 6 9"><path d="M5.6 0.2L0.4 4.5L5.6 8.8z" fill="#555"/></svg><div class="a" style="left:553px;top:141.5px;width:13px;height:13px;border-radius:2.5px;background:#828282;"></div><svg class="a" style="left:557px;top:143.5px" width="6" height="9" viewBox="0 0 6 9"><path d="M0.4 0.2L5.6 4.5L0.4 8.8z" fill="#555"/></svg></div>
<div style="left:933px;top:101px;width:666px;height:491.5px;background:#1c1c1c;"></div>
<div style="left:939.5px;top:107px;width:653px;height:479px;background:#333;"></div>
<span class="t" style="left:1227.70px;top:113px;font-size:13px;transform:scaleX(1.0900);color:#c9c9c9;">CIE 1931 xy</span>
<div style="left:968px;top:127px;width:622px;height:435px;background:#232323;overflow:hidden;"><div class="a" style="left:0;top:0;width:622px;height:435px;background:conic-gradient(from 0deg at 111.31px 403.26px,#00ffff 0deg,#00ffff 21.5deg,#03ffff 22deg,#07ffff 22.5deg,#0bffff 23deg,#10ffff 23.5deg,#15ffff 24deg,#19ffff 24.5deg,#1effff 25deg,#23ffff 25.5deg,#28ffff 26deg,#2dffff 26.5deg,#32ffff 27deg,#38ffff 27.5deg,#3dffff 28deg,#42ffff 28.5deg,#48ffff 29deg,#4effff 29.5deg,#54ffff 30deg,#5affff 30.5deg,#60ffff 31deg,#66ffff 31.5deg,#6cffff 32deg,#73ffff 32.5deg,#7affff 33deg,#80ffff 33.5deg,#87ffff 34deg,#8fffff 34.5deg,#96ffff 35deg,#9effff 35.5deg,#a5ffff 36deg,#adffff 36.5deg,#b6ffff 37deg,#beffff 37.5deg,#c7ffff 38deg,#d0ffff 38.5deg,#d9ffff 39deg,#e2ffff 39.5deg,#ecffff 40deg,#f6ffff 40.5deg,#fffdff 41deg,#fff3ff 41.5deg,#ffe9ff 42deg,#ffe0ff 42.5deg,#ffd7ff 43deg,#ffcfff 43.5deg,#ffc6ff 44deg,#ffbfff 44.5deg,#ffb7ff 45deg,#ffb0ff 45.5deg,#ffa9ff 46deg,#ffa3ff 46.5deg,#ff9cff 47deg,#ff96ff 47.5deg,#ff90ff 48deg,#ff8aff 48.5deg,#ff85ff 49deg,#ff7fff 49.5deg,#ff7aff 50deg,#ff75ff 50.5deg,#ff70ff 51deg,#ff6cff 51.5deg,#ff67ff 52deg,#ff63ff 52.5deg,#ff5eff 53deg,#ff5aff 53.5deg,#ff56ff 54deg,#ff52ff 54.5deg,#ff4eff 55deg,#ff4bff 55.5deg,#ff47ff 56deg,#ff43ff 56.5deg,#ff40ff 57deg,#ff3dff 57.5deg,#ff39ff 58deg,#ff36ff 58.5deg,#ff33ff 59deg,#ff30ff 59.5deg,#ff2dff 60deg,#ff2aff 60.5deg,#ff27ff 61deg,#ff24ff 61.5deg,#ff21ff 62deg,#ff1fff 62.5deg,#ff1cff 63deg,#ff19ff 63.5deg,#ff17ff 64deg,#ff14ff 64.5deg,#ff12ff 65deg,#ff10ff 65.5deg,#ff0dff 66deg,#ff0bff 66.5deg,#ff09ff 67deg,#ff06ff 67.5deg,#ff04ff 68deg,#ff02ff 68.5deg,#ff00ff 69deg,#ff00ff 201.5deg,#0000ff 202deg,#0000ff 248.5deg,#00ffff 249deg,#00ffff 360deg),conic-gradient(from 0deg at 222.12px 124.84px,#00ff00 0deg,#00ff00 21.5deg,#ffff00 22deg,#ffff00 119deg,#ffff01 119.5deg,#ffff02 120deg,#ffff03 120.5deg,#ffff05 121deg,#ffff06 121.5deg,#ffff07 122deg,#ffff08 122.5deg,#ffff09 123deg,#ffff0a 123.5deg,#ffff0c 124deg,#ffff0d 124.5deg,#ffff0e 125deg,#ffff0f 125.5deg,#ffff10 126deg,#ffff12 126.5deg,#ffff13 127deg,#ffff14 127.5deg,#ffff15 128deg,#ffff17 128.5deg,#ffff18 129deg,#ffff19 129.5deg,#ffff1a 130deg,#ffff1c 130.5deg,#ffff1d 131deg,#ffff1e 131.5deg,#ffff1f 132deg,#ffff21 132.5deg,#ffff22 133deg,#ffff23 133.5deg,#ffff25 134deg,#ffff26 134.5deg,#ffff27 135deg,#ffff29 135.5deg,#ffff2a 136deg,#ffff2b 136.5deg,#ffff2d 137deg,#ffff2e 137.5deg,#ffff30 138deg,#ffff31 138.5deg,#ffff32 139deg,#ffff34 139.5deg,#ffff35 140deg,#ffff37 140.5deg,#ffff38 141deg,#ffff3a 141.5deg,#ffff3b 142deg,#ffff3d 142.5deg,#ffff3e 143deg,#ffff40 143.5deg,#ffff41 144deg,#ffff43 144.5deg,#ffff45 145deg,#ffff46 145.5deg,#ffff48 146deg,#ffff4a 146.5deg,#ffff4b 147deg,#ffff4d 147.5deg,#ffff4f 148deg,#ffff50 148.5deg,#ffff52 149deg,#ffff54 149.5deg,#ffff56 150deg,#ffff58 150.5deg,#ffff5a 151deg,#ffff5c 151.5deg,#ffff5d 152deg,#ffff5f 152.5deg,#ffff61 153deg,#ffff63 153.5deg,#ffff65 154deg,#ffff68 154.5deg,#ffff6a 155deg,#ffff6c 155.5deg,#ffff6e 156deg,#ffff70 156.5deg,#ffff73 157deg,#ffff75 157.5deg,#ffff77 158deg,#ffff7a 158.5deg,#ffff7c 159deg,#ffff7f 159.5deg,#ffff81 160deg,#ffff84 160.5deg,#ffff86 161deg,#ffff89 161.5deg,#ffff8c 162deg,#ffff8f 162.5deg,#ffff91 163deg,#ffff94 163.5deg,#ffff97 164deg,#ffff9a 164.5deg,#ffff9e 165deg,#ffffa1 165.5deg,#ffffa4 166deg,#ffffa7 166.5deg,#ffffab 167deg,#ffffae 167.5deg,#ffffb2 168deg,#ffffb6 168.5deg,#ffffba 169deg,#ffffbd 169.5deg,#ffffc2 170deg,#ffffc6 170.5deg,#ffffca 171deg,#ffffce 171.5deg,#ffffd3 172deg,#ffffd8 172.5deg,#ffffdc 173deg,#ffffe1 173.5deg,#ffffe7 174deg,#ffffec 174.5deg,#fffff1 175deg,#fffff7 175.5deg,#fffffd 176deg,#fbffff 176.5deg,#f5ffff 177deg,#efffff 177.5deg,#e9ffff 178deg,#e3ffff 178.5deg,#ddffff 179deg,#d8ffff 179.5deg,#d2ffff 180deg,#ccffff 180.5deg,#c7ffff 181deg,#c1ffff 181.5deg,#bcffff 182deg,#b7ffff 182.5deg,#b1ffff 183deg,#acffff 183.5deg,#a7ffff 184deg,#a1ffff 184.5deg,#9cffff 185deg,#97ffff 185.5deg,#92ffff 186deg,#8dffff 186.5deg,#88ffff 187deg,#83ffff 187.5deg,#7effff 188deg,#79ffff 188.5deg,#74ffff 189deg,#6fffff 189.5deg,#6bffff 190deg,#66ffff 190.5deg,#61ffff 191deg,#5cffff 191.5deg,#58ffff 192deg,#53ffff 192.5deg,#4effff 193deg,#4affff 193.5deg,#45ffff 194deg,#40ffff 194.5deg,#3cffff 195deg,#37ffff 195.5deg,#33ffff 196deg,#2effff 196.5deg,#2affff 197deg,#25ffff 197.5deg,#21ffff 198deg,#1cffff 198.5deg,#18ffff 199deg,#13ffff 199.5deg,#0fffff 200deg,#0bffff 200.5deg,#06ffff 201deg,#02ffff 201.5deg,#00ffff 202deg,#00ffff 298.5deg,#00ff00 299deg,#00ff00 360deg),conic-gradient(from 0deg at 473.30px 264.05px,#ffff00 0deg,#ffff00 68.5deg,#ff0000 69deg,#ff0000 118.5deg,#ff00ff 119deg,#ff00ff 249deg,#ff04ff 249.5deg,#ff08ff 250deg,#ff0cff 250.5deg,#ff11ff 251deg,#ff15ff 251.5deg,#ff19ff 252deg,#ff1eff 252.5deg,#ff22ff 253deg,#ff27ff 253.5deg,#ff2bff 254deg,#ff30ff 254.5deg,#ff35ff 255deg,#ff39ff 255.5deg,#ff3eff 256deg,#ff43ff 256.5deg,#ff49ff 257deg,#ff4eff 257.5deg,#ff53ff 258deg,#ff59ff 258.5deg,#ff5eff 259deg,#ff64ff 259.5deg,#ff6aff 260deg,#ff70ff 260.5deg,#ff76ff 261deg,#ff7cff 261.5deg,#ff82ff 262deg,#ff89ff 262.5deg,#ff8fff 263deg,#ff96ff 263.5deg,#ff9dff 264deg,#ffa4ff 264.5deg,#ffacff 265deg,#ffb3ff 265.5deg,#ffbbff 266deg,#ffc3ff 266.5deg,#ffcbff 267deg,#ffd4ff 267.5deg,#ffdcff 268deg,#ffe5ff 268.5deg,#ffeeff 269deg,#fff8ff 269.5deg,#fffffd 270deg,#fffff3 270.5deg,#ffffea 271deg,#ffffe1 271.5deg,#ffffd9 272deg,#ffffd1 272.5deg,#ffffc9 273deg,#ffffc2 273.5deg,#ffffbb 274deg,#ffffb4 274.5deg,#ffffad 275deg,#ffffa7 275.5deg,#ffffa1 276deg,#ffff9b 276.5deg,#ffff95 277deg,#ffff8f 277.5deg,#ffff8a 278deg,#ffff85 278.5deg,#ffff80 279deg,#ffff7b 279.5deg,#ffff76 280deg,#ffff71 280.5deg,#ffff6d 281deg,#ffff69 281.5deg,#ffff64 282deg,#ffff60 282.5deg,#ffff5c 283deg,#ffff58 283.5deg,#ffff54 284deg,#ffff51 284.5deg,#ffff4d 285deg,#ffff49 285.5deg,#ffff46 286deg,#ffff42 286.5deg,#ffff3f 287deg,#ffff3c 287.5deg,#ffff39 288deg,#ffff36 288.5deg,#ffff32 289deg,#ffff2f 289.5deg,#ffff2d 290deg,#ffff2a 290.5deg,#ffff27 291deg,#ffff24 291.5deg,#ffff21 292deg,#ffff1f 292.5deg,#ffff1c 293deg,#ffff1a 293.5deg,#ffff17 294deg,#ffff15 294.5deg,#ffff12 295deg,#ffff10 295.5deg,#ffff0d 296deg,#ffff0b 296.5deg,#ffff09 297deg,#ffff07 297.5deg,#ffff04 298deg,#ffff02 298.5deg,#ffff00 299deg,#ffff00 360deg),#fff;background-blend-mode:darken,darken,darken,normal;clip-path:polygon(129.1px 431.6px,129.1px 431.6px,129.0px 431.7px,128.9px 431.7px,128.8px 431.7px,128.7px 431.7px,128.5px 431.7px,128.3px 431.7px,128.1px 431.7px,127.9px 431.7px,127.7px 431.7px,127.4px 431.6px,127.1px 431.6px,126.9px 431.5px,126.6px 431.4px,126.3px 431.2px,126.0px 431.1px,125.7px 430.9px,125.3px 430.6px,124.8px 430.4px,124.4px 430.1px,123.9px 429.8px,123.3px 429.4px,122.7px 429.0px,122.0px 428.6px,121.1px 428.1px,120.2px 427.5px,119.1px 426.9px,118.1px 426.2px,117.1px 425.6px,116.2px 425.1px,115.4px 424.6px,114.7px 424.2px,114.1px 423.8px,113.4px 423.4px,112.8px 423.0px,112.1px 422.5px,111.3px 422.0px,110.4px 421.4px,109.6px 420.9px,108.7px 420.3px,107.8px 419.6px,106.9px 418.9px,105.9px 418.2px,104.9px 417.4px,103.9px 416.6px,102.9px 415.7px,101.8px 414.8px,100.6px 413.6px,99.3px 412.4px,98.0px 411.1px,96.7px 409.6px,95.2px 408.0px,93.7px 406.3px,92.2px 404.4px,90.6px 402.3px,88.9px 400.2px,87.1px 397.8px,85.3px 395.3px,83.4px 392.5px,81.5px 389.4px,79.4px 386.1px,77.3px 382.6px,75.1px 378.9px,72.8px 374.8px,70.4px 370.5px,67.9px 365.8px,65.4px 360.8px,62.6px 355.4px,59.8px 349.8px,57.0px 343.8px,54.1px 337.5px,51.3px 330.7px,48.4px 323.5px,45.5px 316.0px,42.6px 308.0px,39.7px 299.7px,36.9px 291.1px,34.0px 282.1px,31.2px 272.7px,28.4px 262.9px,25.6px 252.8px,22.9px 242.4px,20.3px 231.9px,17.9px 221.4px,15.6px 210.8px,13.4px 199.9px,11.4px 189.0px,9.5px 178.0px,7.9px 167.2px,6.6px 156.6px,5.4px 146.2px,4.5px 135.8px,3.8px 125.6px,3.4px 115.6px,3.2px 105.9px,3.4px 96.6px,3.9px 87.6px,4.7px 78.7px,5.7px 70.2px,7.1px 62.1px,8.8px 54.5px,10.8px 47.4px,13.1px 40.8px,15.8px 34.7px,18.8px 29.1px,22.1px 24.0px,25.6px 19.4px,29.2px 15.5px,33.1px 12.3px,37.3px 9.7px,41.6px 7.7px,46.1px 6.2px,50.7px 5.1px,55.4px 4.3px,60.1px 4.0px,65.0px 4.2px,69.9px 4.9px,74.9px 5.9px,79.9px 7.0px,84.9px 8.2px,89.8px 9.6px,94.9px 11.1px,99.9px 12.9px,104.9px 14.8px,109.9px 16.7px,114.8px 18.7px,119.6px 20.6px,124.4px 22.6px,129.1px 24.7px,133.7px 26.8px,138.4px 29.0px,143.0px 31.2px,147.6px 33.4px,152.1px 35.7px,156.7px 38.1px,161.1px 40.4px,165.6px 42.8px,170.1px 45.3px,174.6px 47.8px,179.1px 50.3px,183.5px 52.9px,188.0px 55.5px,192.4px 58.1px,196.9px 60.8px,201.3px 63.4px,205.7px 66.1px,210.1px 68.9px,214.5px 71.7px,218.9px 74.4px,223.3px 77.3px,227.7px 80.1px,232.1px 82.9px,236.5px 85.8px,240.9px 88.7px,245.3px 91.6px,249.7px 94.5px,254.1px 97.4px,258.5px 100.3px,262.9px 103.3px,267.3px 106.3px,271.7px 109.2px,276.1px 112.2px,280.5px 115.2px,284.9px 118.2px,289.3px 121.2px,293.7px 124.2px,298.1px 127.2px,302.4px 130.2px,306.8px 133.2px,311.2px 136.2px,315.5px 139.2px,319.9px 142.2px,324.3px 145.2px,328.6px 148.2px,332.9px 151.2px,337.2px 154.2px,341.5px 157.1px,345.7px 160.1px,350.0px 163.0px,354.2px 166.0px,358.4px 168.9px,362.6px 171.8px,366.8px 174.7px,370.9px 177.6px,375.0px 180.5px,379.1px 183.3px,383.2px 186.1px,387.2px 188.9px,391.2px 191.7px,395.2px 194.5px,399.1px 197.2px,403.0px 199.9px,406.8px 202.6px,410.6px 205.2px,414.4px 207.8px,418.1px 210.4px,421.8px 213.0px,425.4px 215.5px,429.0px 218.0px,432.5px 220.4px,436.0px 222.8px,439.3px 225.2px,442.7px 227.5px,445.9px 229.8px,449.0px 232.0px,452.1px 234.1px,455.1px 236.2px,458.0px 238.2px,460.9px 240.2px,463.7px 242.1px,466.5px 244.1px,469.2px 245.9px,471.8px 247.8px,474.4px 249.6px,476.9px 251.3px,479.4px 253.0px,481.6px 254.6px,483.7px 256.0px,485.7px 257.4px,487.7px 258.8px,489.9px 260.3px,492.4px 262.0px,495.3px 264.0px,498.5px 266.3px,501.9px 268.7px,505.3px 271.0px,508.5px 273.3px,511.3px 275.2px,513.8px 277.0px,516.0px 278.5px,518.1px 279.9px,520.0px 281.2px,521.7px 282.5px,523.5px 283.6px,525.1px 284.8px,526.6px 285.8px,528.0px 286.8px,529.3px 287.7px,530.5px 288.6px,531.7px 289.4px,532.7px 290.1px,533.7px 290.8px,534.6px 291.4px,535.4px 291.9px,536.1px 292.4px,536.8px 292.9px,537.5px 293.4px,538.0px 293.7px,538.5px 294.1px,538.9px 294.4px,539.3px 294.7px,539.8px 295.0px,540.2px 295.3px,540.7px 295.6px,541.2px 296.0px,541.6px 296.2px,542.0px 296.5px,542.3px 296.7px,542.6px 296.9px,542.8px 297.1px,542.9px 297.2px,543.1px 297.3px,543.2px 297.4px,543.3px 297.4px)"></div><div class="a" style="left:0;top:0;width:622px;height:435px;background:rgba(0,0,0,0.404);clip-path:path(evenodd,'M129.1 431.6L129.1 431.6L129.0 431.7L128.9 431.7L128.8 431.7L128.7 431.7L128.5 431.7L128.3 431.7L128.1 431.7L127.9 431.7L127.7 431.7L127.4 431.6L127.1 431.6L126.9 431.5L126.6 431.4L126.3 431.2L126.0 431.1L125.7 430.9L125.3 430.6L124.8 430.4L124.4 430.1L123.9 429.8L123.3 429.4L122.7 429.0L122.0 428.6L121.1 428.1L120.2 427.5L119.1 426.9L118.1 426.2L117.1 425.6L116.2 425.1L115.4 424.6L114.7 424.2L114.1 423.8L113.4 423.4L112.8 423.0L112.1 422.5L111.3 422.0L110.4 421.4L109.6 420.9L108.7 420.3L107.8 419.6L106.9 418.9L105.9 418.2L104.9 417.4L103.9 416.6L102.9 415.7L101.8 414.8L100.6 413.6L99.3 412.4L98.0 411.1L96.7 409.6L95.2 408.0L93.7 406.3L92.2 404.4L90.6 402.3L88.9 400.2L87.1 397.8L85.3 395.3L83.4 392.5L81.5 389.4L79.4 386.1L77.3 382.6L75.1 378.9L72.8 374.8L70.4 370.5L67.9 365.8L65.4 360.8L62.6 355.4L59.8 349.8L57.0 343.8L54.1 337.5L51.3 330.7L48.4 323.5L45.5 316.0L42.6 308.0L39.7 299.7L36.9 291.1L34.0 282.1L31.2 272.7L28.4 262.9L25.6 252.8L22.9 242.4L20.3 231.9L17.9 221.4L15.6 210.8L13.4 199.9L11.4 189.0L9.5 178.0L7.9 167.2L6.6 156.6L5.4 146.2L4.5 135.8L3.8 125.6L3.4 115.6L3.2 105.9L3.4 96.6L3.9 87.6L4.7 78.7L5.7 70.2L7.1 62.1L8.8 54.5L10.8 47.4L13.1 40.8L15.8 34.7L18.8 29.1L22.1 24.0L25.6 19.4L29.2 15.5L33.1 12.3L37.3 9.7L41.6 7.7L46.1 6.2L50.7 5.1L55.4 4.3L60.1 4.0L65.0 4.2L69.9 4.9L74.9 5.9L79.9 7.0L84.9 8.2L89.8 9.6L94.9 11.1L99.9 12.9L104.9 14.8L109.9 16.7L114.8 18.7L119.6 20.6L124.4 22.6L129.1 24.7L133.7 26.8L138.4 29.0L143.0 31.2L147.6 33.4L152.1 35.7L156.7 38.1L161.1 40.4L165.6 42.8L170.1 45.3L174.6 47.8L179.1 50.3L183.5 52.9L188.0 55.5L192.4 58.1L196.9 60.8L201.3 63.4L205.7 66.1L210.1 68.9L214.5 71.7L218.9 74.4L223.3 77.3L227.7 80.1L232.1 82.9L236.5 85.8L240.9 88.7L245.3 91.6L249.7 94.5L254.1 97.4L258.5 100.3L262.9 103.3L267.3 106.3L271.7 109.2L276.1 112.2L280.5 115.2L284.9 118.2L289.3 121.2L293.7 124.2L298.1 127.2L302.4 130.2L306.8 133.2L311.2 136.2L315.5 139.2L319.9 142.2L324.3 145.2L328.6 148.2L332.9 151.2L337.2 154.2L341.5 157.1L345.7 160.1L350.0 163.0L354.2 166.0L358.4 168.9L362.6 171.8L366.8 174.7L370.9 177.6L375.0 180.5L379.1 183.3L383.2 186.1L387.2 188.9L391.2 191.7L395.2 194.5L399.1 197.2L403.0 199.9L406.8 202.6L410.6 205.2L414.4 207.8L418.1 210.4L421.8 213.0L425.4 215.5L429.0 218.0L432.5 220.4L436.0 222.8L439.3 225.2L442.7 227.5L445.9 229.8L449.0 232.0L452.1 234.1L455.1 236.2L458.0 238.2L460.9 240.2L463.7 242.1L466.5 244.1L469.2 245.9L471.8 247.8L474.4 249.6L476.9 251.3L479.4 253.0L481.6 254.6L483.7 256.0L485.7 257.4L487.7 258.8L489.9 260.3L492.4 262.0L495.3 264.0L498.5 266.3L501.9 268.7L505.3 271.0L508.5 273.3L511.3 275.2L513.8 277.0L516.0 278.5L518.1 279.9L520.0 281.2L521.7 282.5L523.5 283.6L525.1 284.8L526.6 285.8L528.0 286.8L529.3 287.7L530.5 288.6L531.7 289.4L532.7 290.1L533.7 290.8L534.6 291.4L535.4 291.9L536.1 292.4L536.8 292.9L537.5 293.4L538.0 293.7L538.5 294.1L538.9 294.4L539.3 294.7L539.8 295.0L540.2 295.3L540.7 295.6L541.2 296.0L541.6 296.2L542.0 296.5L542.3 296.7L542.6 296.9L542.8 297.1L542.9 297.2L543.1 297.3L543.2 297.4L543.3 297.4ZM473.3 264.1L222.1 124.8L111.3 403.3Z')"></div></div>
<div style="left:968px;top:127px;width:622px;height:435px;border:1px solid #9a9a9a;box-sizing:border-box;"></div>
<div style="left:962px;top:560.5px;width:6px;height:1.8px;background:#d0d0d0;"></div>
<span class="t" style="left:954.46px;top:556px;font-size:13px;transform:scaleX(1.0700);color:#c9c9c9;">0</span>
<div style="left:967.8px;top:562px;width:1.4px;height:4.5px;background:#c0c0c0;"></div>
<span class="t" style="left:964.83px;top:569px;font-size:13px;transform:scaleX(1.0700);color:#c9c9c9;">0</span>
<div style="left:962px;top:508.94px;width:6px;height:1.8px;background:#d0d0d0;"></div>
<span class="t" style="left:942.86px;top:504px;font-size:13px;transform:scaleX(1.0700);color:#c9c9c9;">0.1</span>
<div style="left:1041.67px;top:562px;width:1.4px;height:4.5px;background:#c0c0c0;"></div>
<span class="t" style="left:1032.90px;top:569px;font-size:13px;transform:scaleX(1.0700);color:#c9c9c9;">0.1</span>
<div style="left:962px;top:457.38px;width:6px;height:1.8px;background:#d0d0d0;"></div>
<span class="t" style="left:942.86px;top:453px;font-size:13px;transform:scaleX(1.0700);color:#c9c9c9;">0.2</span>
<div style="left:1115.55px;top:562px;width:1.4px;height:4.5px;background:#c0c0c0;"></div>
<span class="t" style="left:1106.78px;top:569px;font-size:13px;transform:scaleX(1.0700);color:#c9c9c9;">0.2</span>
<div style="left:962px;top:405.82px;width:6px;height:1.8px;background:#d0d0d0;"></div>
<span class="t" style="left:942.86px;top:401px;font-size:13px;transform:scaleX(1.0700);color:#c9c9c9;">0.3</span>
<div style="left:1189.42px;top:562px;width:1.4px;height:4.5px;background:#c0c0c0;"></div>
<span class="t" style="left:1180.65px;top:569px;font-size:13px;transform:scaleX(1.0700);color:#c9c9c9;">0.3</span>
<div style="left:962px;top:354.26px;width:6px;height:1.8px;background:#d0d0d0;"></div>
<span class="t" style="left:942.86px;top:350px;font-size:13px;transform:scaleX(1.0700);color:#c9c9c9;">0.4</span>
<div style="left:1263.3px;top:562px;width:1.4px;height:4.5px;background:#c0c0c0;"></div>
<span class="t" style="left:1254.53px;top:569px;font-size:13px;transform:scaleX(1.0700);color:#c9c9c9;">0.4</span>
<div style="left:962px;top:302.7px;width:6px;height:1.8px;background:#d0d0d0;"></div>
<span class="t" style="left:942.86px;top:298px;font-size:13px;transform:scaleX(1.0700);color:#c9c9c9;">0.5</span>
<div style="left:1337.17px;top:562px;width:1.4px;height:4.5px;background:#c0c0c0;"></div>
<span class="t" style="left:1328.40px;top:569px;font-size:13px;transform:scaleX(1.0700);color:#c9c9c9;">0.5</span>
<div style="left:962px;top:251.14px;width:6px;height:1.8px;background:#d0d0d0;"></div>
<span class="t" style="left:942.86px;top:246px;font-size:13px;transform:scaleX(1.0700);color:#c9c9c9;">0.6</span>
<div style="left:1411.05px;top:562px;width:1.4px;height:4.5px;background:#c0c0c0;"></div>
<span class="t" style="left:1402.28px;top:569px;font-size:13px;transform:scaleX(1.0700);color:#c9c9c9;">0.6</span>
<div style="left:962px;top:199.58px;width:6px;height:1.8px;background:#d0d0d0;"></div>
<span class="t" style="left:942.86px;top:195px;font-size:13px;transform:scaleX(1.0700);color:#c9c9c9;">0.7</span>
<div style="left:1484.92px;top:562px;width:1.4px;height:4.5px;background:#c0c0c0;"></div>
<span class="t" style="left:1476.15px;top:569px;font-size:13px;transform:scaleX(1.0700);color:#c9c9c9;">0.7</span>
<div style="left:962px;top:148.02px;width:6px;height:1.8px;background:#d0d0d0;"></div>
<span class="t" style="left:942.86px;top:143px;font-size:13px;transform:scaleX(1.0700);color:#c9c9c9;">0.8</span>
<div style="left:1558.8px;top:562px;width:1.4px;height:4.5px;background:#c0c0c0;"></div>
<span class="t" style="left:1550.03px;top:569px;font-size:13px;transform:scaleX(1.0700);color:#c9c9c9;">0.8</span>
<div style="left:1345px;top:532px;width:241.5px;height:25px;background:#303030;"></div>
<span class="t" style="left:1345.30px;top:536px;font-size:18.75px;transform:scaleX(1.0042);color:#f0f0f0;">RGB Triplet: 255, 255, 0</span>
<div style="left:1371px;top:131px;width:214px;height:166.5px;background:#3a3a3a;"></div>
<div style="left:1373px;top:133px;width:210px;height:162.5px;overflow:hidden;"><div class="a" style="left:0;top:0;width:210px;height:162.5px;background:conic-gradient(from 0deg at -742.87px 1166.13px,#00ffff 0deg,#00ffff 19.75deg,#02ffff 20deg,#05ffff 20.25deg,#07ffff 20.5deg,#0affff 20.75deg,#0cffff 21deg,#0effff 21.25deg,#11ffff 21.5deg,#13ffff 21.75deg,#16ffff 22deg,#18ffff 22.25deg,#1bffff 22.5deg,#1effff 22.75deg,#20ffff 23deg,#23ffff 23.25deg,#25ffff 23.5deg,#28ffff 23.75deg,#2bffff 24deg,#2effff 24.25deg,#30ffff 24.5deg,#33ffff 24.75deg,#36ffff 25deg,#39ffff 25.25deg,#3cffff 25.5deg,#3effff 25.75deg,#41ffff 26deg,#44ffff 26.25deg,#47ffff 26.5deg,#4affff 26.75deg,#4dffff 27deg,#50ffff 27.25deg,#54ffff 27.5deg,#57ffff 27.75deg,#5affff 28deg,#5dffff 28.25deg,#60ffff 28.5deg,#64ffff 28.75deg,#67ffff 29deg,#6affff 29.25deg,#6effff 29.5deg,#71ffff 29.75deg,#75ffff 30deg,#78ffff 30.25deg,#7cffff 30.5deg,#7fffff 30.75deg,#83ffff 31deg,#86ffff 31.25deg,#8affff 31.5deg,#8effff 31.75deg,#92ffff 32deg,#96ffff 32.25deg,#9affff 32.5deg,#9effff 32.75deg,#a2ffff 33deg,#a6ffff 33.25deg,#aaffff 33.5deg,#aeffff 33.75deg,#b2ffff 34deg,#b6ffff 34.25deg,#bbffff 34.5deg,#bfffff 34.75deg,#c4ffff 35deg,#c8ffff 35.25deg,#cdffff 35.5deg,#d1ffff 35.75deg,#d6ffff 36deg,#dbffff 36.25deg,#e0ffff 36.5deg,#e5ffff 36.75deg,#eaffff 37deg,#efffff 37.25deg,#f4ffff 37.5deg,#f9ffff 37.75deg,#ffffff 38deg,#fffaff 38.25deg,#fff5ff 38.5deg,#fff0ff 38.75deg,#ffebff 39deg,#ffe6ff 39.25deg,#ffe1ff 39.5deg,#ffddff 39.75deg,#ffd8ff 40deg,#ffd4ff 40.25deg,#ffd0ff 40.5deg,#ffcbff 40.75deg,#ffc7ff 41deg,#ffc3ff 41.25deg,#ffbfff 41.5deg,#ffbcff 41.75deg,#ffb8ff 42deg,#ffb4ff 42.25deg,#ffb1ff 42.5deg,#ffadff 42.75deg,#ffaaff 43deg,#ffa6ff 43.25deg,#ffa3ff 43.5deg,#ffa0ff 43.75deg,#ff9dff 44deg,#ff9aff 44.25deg,#ff97ff 44.5deg,#ff94ff 44.75deg,#ff91ff 45deg,#ff8eff 45.25deg,#ff8bff 45.5deg,#ff88ff 45.75deg,#ff85ff 46deg,#ff83ff 46.25deg,#ff80ff 46.5deg,#ff7eff 46.75deg,#ff7bff 47deg,#ff78ff 47.25deg,#ff76ff 47.5deg,#ff74ff 47.75deg,#ff71ff 48deg,#ff6fff 48.25deg,#ff6dff 48.5deg,#ff6aff 48.75deg,#ff68ff 49deg,#ff66ff 49.25deg,#ff64ff 49.5deg,#ff62ff 49.75deg,#ff5fff 50deg,#ff5dff 50.25deg,#ff5bff 50.5deg,#ff59ff 50.75deg,#ff57ff 51deg,#ff55ff 51.25deg,#ff54ff 51.5deg,#ff52ff 51.75deg,#ff50ff 52deg,#ff4eff 52.25deg,#ff4cff 52.5deg,#ff4aff 52.75deg,#ff48ff 53deg,#ff47ff 53.25deg,#ff45ff 53.5deg,#ff43ff 53.75deg,#ff42ff 54deg,#ff40ff 54.25deg,#ff3eff 54.5deg,#ff3dff 54.75deg,#ff3bff 55deg,#ff3aff 55.25deg,#ff38ff 55.5deg,#ff36ff 55.75deg,#ff35ff 56deg,#ff33ff 56.25deg,#ff32ff 56.5deg,#ff30ff 56.75deg,#ff2fff 57deg,#ff2eff 57.25deg,#ff2cff 57.5deg,#ff2bff 57.75deg,#ff29ff 58deg,#ff28ff 58.25deg,#ff27ff 58.5deg,#ff25ff 58.75deg,#ff24ff 59deg,#ff23ff 59.25deg,#ff21ff 59.5deg,#ff20ff 59.75deg,#ff1fff 60deg,#ff1eff 60.25deg,#ff1cff 60.5deg,#ff1bff 60.75deg,#ff1aff 61deg,#ff19ff 61.25deg,#ff17ff 61.5deg,#ff16ff 61.75deg,#ff15ff 62deg,#ff14ff 62.25deg,#ff13ff 62.5deg,#ff12ff 62.75deg,#ff10ff 63deg,#ff0fff 63.25deg,#ff0eff 63.5deg,#ff0dff 63.75deg,#ff0cff 64deg,#ff0bff 64.25deg,#ff0aff 64.5deg,#ff09ff 64.75deg,#ff08ff 65deg,#ff07ff 65.25deg,#ff06ff 65.5deg,#ff05ff 65.75deg,#ff04ff 66deg,#ff03ff 66.25deg,#ff02ff 66.5deg,#ff01ff 66.75deg,#ff00ff 67deg,#ff00ff 199.5deg,#0000ff 199.75deg,#0000ff 246.75deg,#00ffff 247deg,#00ffff 360deg),conic-gradient(from 0deg at -270.61px -149.47px,#00ff00 0deg,#00ff00 19.5deg,#ffff00 19.75deg,#ffff00 121.75deg,#ffff01 122deg,#ffff01 122.25deg,#ffff02 122.5deg,#ffff03 122.75deg,#ffff03 123deg,#ffff04 123.25deg,#ffff04 123.5deg,#ffff05 123.75deg,#ffff05 124deg,#ffff06 124.25deg,#ffff06 124.5deg,#ffff07 124.75deg,#ffff08 125deg,#ffff08 125.25deg,#ffff09 125.5deg,#ffff09 125.75deg,#ffff0a 126deg,#ffff0a 126.25deg,#ffff0b 126.5deg,#ffff0c 126.75deg,#ffff0c 127deg,#ffff0d 127.25deg,#ffff0d 127.5deg,#ffff0e 127.75deg,#ffff0e 128deg,#ffff0f 128.25deg,#ffff10 128.5deg,#ffff10 128.75deg,#ffff11 129deg,#ffff11 129.25deg,#ffff12 129.5deg,#ffff13 129.75deg,#ffff13 130deg,#ffff14 130.25deg,#ffff14 130.5deg,#ffff15 130.75deg,#ffff16 131deg,#ffff16 131.25deg,#ffff17 131.5deg,#ffff17 131.75deg,#ffff18 132deg,#ffff19 132.25deg,#ffff19 132.5deg,#ffff1a 132.75deg,#ffff1a 133deg,#ffff1b 133.25deg,#ffff1c 133.5deg,#ffff1c 133.75deg,#ffff1d 134deg,#ffff1e 134.25deg,#ffff1e 134.5deg,#ffff1f 134.75deg,#ffff20 135deg,#ffff20 135.25deg,#ffff21 135.5deg,#ffff21 135.75deg,#ffff22 136deg,#ffff23 136.25deg,#ffff23 136.5deg,#ffff24 136.75deg,#ffff25 137deg,#ffff25 137.25deg,#ffff26 137.5deg,#ffff27 137.75deg,#ffff27 138deg,#ffff28 138.25deg,#ffff29 138.5deg,#ffff29 138.75deg,#ffff2a 139deg,#ffff2b 139.25deg,#ffff2c 139.5deg,#ffff2c 139.75deg,#ffff2d 140deg,#ffff2e 140.25deg,#ffff2e 140.5deg,#ffff2f 140.75deg,#ffff30 141deg,#ffff30 141.25deg,#ffff31 141.5deg,#ffff32 141.75deg,#ffff33 142deg,#ffff33 142.25deg,#ffff34 142.5deg,#ffff35 142.75deg,#ffff36 143deg,#ffff36 143.25deg,#ffff37 143.5deg,#ffff38 143.75deg,#ffff39 144deg,#ffff39 144.25deg,#ffff3a 144.5deg,#ffff3b 144.75deg,#ffff3c 145deg,#ffff3d 145.25deg,#ffff3d 145.5deg,#ffff3e 145.75deg,#ffff3f 146deg,#ffff40 146.25deg,#ffff41 146.5deg,#ffff41 146.75deg,#ffff42 147deg,#ffff43 147.25deg,#ffff44 147.5deg,#ffff45 147.75deg,#ffff46 148deg,#ffff46 148.25deg,#ffff47 148.5deg,#ffff48 148.75deg,#ffff49 149deg,#ffff4a 149.25deg,#ffff4b 149.5deg,#ffff4c 149.75deg,#ffff4d 150deg,#ffff4d 150.25deg,#ffff4e 150.5deg,#ffff4f 150.75deg,#ffff50 151deg,#ffff51 151.25deg,#ffff52 151.5deg,#ffff53 151.75deg,#ffff54 152deg,#ffff55 152.25deg,#ffff56 152.5deg,#ffff57 152.75deg,#ffff58 153deg,#ffff59 153.25deg,#ffff5a 153.5deg,#ffff5b 153.75deg,#ffff5c 154deg,#ffff5d 154.25deg,#ffff5e 154.5deg,#ffff5f 154.75deg,#ffff60 155deg,#ffff61 155.25deg,#ffff62 155.5deg,#ffff63 155.75deg,#ffff64 156deg,#ffff65 156.25deg,#ffff67 156.5deg,#ffff68 156.75deg,#ffff69 157deg,#ffff6a 157.25deg,#ffff6b 157.5deg,#ffff6c 157.75deg,#ffff6d 158deg,#ffff6f 158.25deg,#ffff70 158.5deg,#ffff71 158.75deg,#ffff72 159deg,#ffff74 159.25deg,#ffff75 159.5deg,#ffff76 159.75deg,#ffff77 160deg,#ffff79 160.25deg,#ffff7a 160.5deg,#ffff7b 160.75deg,#ffff7d 161deg,#ffff7e 161.25deg,#ffff7f 161.5deg,#ffff81 161.75deg,#ffff82 162deg,#ffff83 162.25deg,#ffff85 162.5deg,#ffff86 162.75deg,#ffff88 163deg,#ffff89 163.25deg,#ffff8b 163.5deg,#ffff8c 163.75deg,#ffff8e 164deg,#ffff8f 164.25deg,#ffff91 164.5deg,#ffff92 164.75deg,#ffff94 165deg,#ffff96 165.25deg,#ffff97 165.5deg,#ffff99 165.75deg,#ffff9b 166deg,#ffff9c 166.25deg,#ffff9e 166.5deg,#ffffa0 166.75deg,#ffffa2 167deg,#ffffa3 167.25deg,#ffffa5 167.5deg,#ffffa7 167.75deg,#ffffa9 168deg,#ffffab 168.25deg,#ffffad 168.5deg,#ffffaf 168.75deg,#ffffb1 169deg,#ffffb3 169.25deg,#ffffb5 169.5deg,#ffffb7 169.75deg,#ffffb9 170deg,#ffffbb 170.25deg,#ffffbd 170.5deg,#ffffc0 170.75deg,#ffffc2 171deg,#ffffc4 171.25deg,#ffffc6 171.5deg,#ffffc9 171.75deg,#ffffcb 172deg,#ffffce 172.25deg,#ffffd0 172.5deg,#ffffd3 172.75deg,#ffffd5 173deg,#ffffd8 173.25deg,#ffffdb 173.5deg,#ffffdd 173.75deg,#ffffe0 174deg,#ffffe3 174.25deg,#ffffe6 174.5deg,#ffffe9 174.75deg,#ffffec 175deg,#ffffef 175.25deg,#fffff2 175.5deg,#fffff5 175.75deg,#fffff8 176deg,#fffffb 176.25deg,#ffffff 176.5deg,#fcffff 176.75deg,#f9ffff 177deg,#f5ffff 177.25deg,#f2ffff 177.5deg,#efffff 177.75deg,#ecffff 178deg,#e8ffff 178.25deg,#e5ffff 178.5deg,#e2ffff 178.75deg,#dfffff 179deg,#dbffff 179.25deg,#d8ffff 179.5deg,#d5ffff 179.75deg,#d2ffff 180deg,#cfffff 180.25deg,#ccffff 180.5deg,#c9ffff 180.75deg,#c6ffff 181deg,#c3ffff 181.25deg,#c0ffff 181.5deg,#bdffff 181.75deg,#baffff 182deg,#b7ffff 182.25deg,#b4ffff 182.5deg,#b1ffff 182.75deg,#aeffff 183deg,#abffff 183.25deg,#a8ffff 183.5deg,#a5ffff 183.75deg,#a2ffff 184deg,#9fffff 184.25deg,#9cffff 184.5deg,#9affff 184.75deg,#97ffff 185deg,#94ffff 185.25deg,#91ffff 185.5deg,#8effff 185.75deg,#8cffff 186deg,#89ffff 186.25deg,#86ffff 186.5deg,#83ffff 186.75deg,#81ffff 187deg,#7effff 187.25deg,#7bffff 187.5deg,#78ffff 187.75deg,#76ffff 188deg,#73ffff 188.25deg,#70ffff 188.5deg,#6effff 188.75deg,#6bffff 189deg,#68ffff 189.25deg,#66ffff 189.5deg,#63ffff 189.75deg,#60ffff 190deg,#5effff 190.25deg,#5bffff 190.5deg,#59ffff 190.75deg,#56ffff 191deg,#53ffff 191.25deg,#51ffff 191.5deg,#4effff 191.75deg,#4cffff 192deg,#49ffff 192.25deg,#47ffff 192.5deg,#44ffff 192.75deg,#42ffff 193deg,#3fffff 193.25deg,#3dffff 193.5deg,#3affff 193.75deg,#38ffff 194deg,#35ffff 194.25deg,#33ffff 194.5deg,#30ffff 194.75deg,#2effff 195deg,#2bffff 195.25deg,#29ffff 195.5deg,#26ffff 195.75deg,#24ffff 196deg,#22ffff 196.25deg,#1fffff 196.5deg,#1dffff 196.75deg,#1affff 197deg,#18ffff 197.25deg,#15ffff 197.5deg,#13ffff 197.75deg,#11ffff 198deg,#0effff 198.25deg,#0cffff 198.5deg,#09ffff 198.75deg,#07ffff 199deg,#05ffff 199.25deg,#02ffff 199.5deg,#00ffff 199.75deg,#00ffff 301.5deg,#00ff00 301.75deg,#00ff00 360deg),conic-gradient(from 0deg at 799.86px 508.33px,#ffff00 0deg,#ffff00 66.75deg,#ff0000 67deg,#ff0000 121.5deg,#ff00ff 121.75deg,#ff00ff 246.75deg,#ff01ff 247deg,#ff03ff 247.25deg,#ff04ff 247.5deg,#ff06ff 247.75deg,#ff08ff 248deg,#ff0aff 248.25deg,#ff0cff 248.5deg,#ff0eff 248.75deg,#ff10ff 249deg,#ff12ff 249.25deg,#ff14ff 249.5deg,#ff16ff 249.75deg,#ff18ff 250deg,#ff1aff 250.25deg,#ff1cff 250.5deg,#ff1eff 250.75deg,#ff20ff 251deg,#ff22ff 251.25deg,#ff24ff 251.5deg,#ff26ff 251.75deg,#ff28ff 252deg,#ff2aff 252.25deg,#ff2cff 252.5deg,#ff2eff 252.75deg,#ff31ff 253deg,#ff33ff 253.25deg,#ff35ff 253.5deg,#ff37ff 253.75deg,#ff39ff 254deg,#ff3cff 254.25deg,#ff3eff 254.5deg,#ff40ff 254.75deg,#ff43ff 255deg,#ff45ff 255.25deg,#ff47ff 255.5deg,#ff4aff 255.75deg,#ff4cff 256deg,#ff4eff 256.25deg,#ff51ff 256.5deg,#ff53ff 256.75deg,#ff56ff 257deg,#ff58ff 257.25deg,#ff5bff 257.5deg,#ff5dff 257.75deg,#ff60ff 258deg,#ff62ff 258.25deg,#ff65ff 258.5deg,#ff68ff 258.75deg,#ff6aff 259deg,#ff6dff 259.25deg,#ff70ff 259.5deg,#ff73ff 259.75deg,#ff75ff 260deg,#ff78ff 260.25deg,#ff7bff 260.5deg,#ff7eff 260.75deg,#ff81ff 261deg,#ff84ff 261.25deg,#ff86ff 261.5deg,#ff89ff 261.75deg,#ff8cff 262deg,#ff8fff 262.25deg,#ff93ff 262.5deg,#ff96ff 262.75deg,#ff99ff 263deg,#ff9cff 263.25deg,#ff9fff 263.5deg,#ffa2ff 263.75deg,#ffa6ff 264deg,#ffa9ff 264.25deg,#ffacff 264.5deg,#ffb0ff 264.75deg,#ffb3ff 265deg,#ffb7ff 265.25deg,#ffbaff 265.5deg,#ffbeff 265.75deg,#ffc1ff 266deg,#ffc5ff 266.25deg,#ffc9ff 266.5deg,#ffccff 266.75deg,#ffd0ff 267deg,#ffd4ff 267.25deg,#ffd8ff 267.5deg,#ffdcff 267.75deg,#ffe0ff 268deg,#ffe4ff 268.25deg,#ffe8ff 268.5deg,#ffecff 268.75deg,#fff0ff 269deg,#fff4ff 269.25deg,#fff9ff 269.5deg,#fffdff 269.75deg,#fffffd 270deg,#fffff8 270.25deg,#fffff4 270.5deg,#fffff0 270.75deg,#ffffec 271deg,#ffffe8 271.25deg,#ffffe4 271.5deg,#ffffe0 271.75deg,#ffffdc 272deg,#ffffd9 272.25deg,#ffffd5 272.5deg,#ffffd1 272.75deg,#ffffce 273deg,#ffffca 273.25deg,#ffffc7 273.5deg,#ffffc4 273.75deg,#ffffc0 274deg,#ffffbd 274.25deg,#ffffba 274.5deg,#ffffb7 274.75deg,#ffffb4 275deg,#ffffb1 275.25deg,#ffffae 275.5deg,#ffffab 275.75deg,#ffffa8 276deg,#ffffa5 276.25deg,#ffffa2 276.5deg,#ffffa0 276.75deg,#ffff9d 277deg,#ffff9a 277.25deg,#ffff98 277.5deg,#ffff95 277.75deg,#ffff93 278deg,#ffff90 278.25deg,#ffff8e 278.5deg,#ffff8b 278.75deg,#ffff89 279deg,#ffff86 279.25deg,#ffff84 279.5deg,#ffff82 279.75deg,#ffff7f 280deg,#ffff7d 280.25deg,#ffff7b 280.5deg,#ffff79 280.75deg,#ffff77 281deg,#ffff74 281.25deg,#ffff72 281.5deg,#ffff70 281.75deg,#ffff6e 282deg,#ffff6c 282.25deg,#ffff6a 282.5deg,#ffff68 282.75deg,#ffff66 283deg,#ffff64 283.25deg,#ffff62 283.5deg,#ffff61 283.75deg,#ffff5f 284deg,#ffff5d 284.25deg,#ffff5b 284.5deg,#ffff59 284.75deg,#ffff57 285deg,#ffff56 285.25deg,#ffff54 285.5deg,#ffff52 285.75deg,#ffff51 286deg,#ffff4f 286.25deg,#ffff4d 286.5deg,#ffff4c 286.75deg,#ffff4a 287deg,#ffff48 287.25deg,#ffff47 287.5deg,#ffff45 287.75deg,#ffff44 288deg,#ffff42 288.25deg,#ffff40 288.5deg,#ffff3f 288.75deg,#ffff3d 289deg,#ffff3c 289.25deg,#ffff3a 289.5deg,#ffff39 289.75deg,#ffff38 290deg,#ffff36 290.25deg,#ffff35 290.5deg,#ffff33 290.75deg,#ffff32 291deg,#ffff31 291.25deg,#ffff2f 291.5deg,#ffff2e 291.75deg,#ffff2c 292deg,#ffff2b 292.25deg,#ffff2a 292.5deg,#ffff28 292.75deg,#ffff27 293deg,#ffff26 293.25deg,#ffff25 293.5deg,#ffff23 293.75deg,#ffff22 294deg,#ffff21 294.25deg,#ffff20 294.5deg,#ffff1e 294.75deg,#ffff1d 295deg,#ffff1c 295.25deg,#ffff1b 295.5deg,#ffff19 295.75deg,#ffff18 296deg,#ffff17 296.25deg,#ffff16 296.5deg,#ffff15 296.75deg,#ffff14 297deg,#ffff13 297.25deg,#ffff11 297.5deg,#ffff10 297.75deg,#ffff0f 298deg,#ffff0e 298.25deg,#ffff0d 298.5deg,#ffff0c 298.75deg,#ffff0b 299deg,#ffff0a 299.25deg,#ffff09 299.5deg,#ffff08 299.75deg,#ffff06 300deg,#ffff05 300.25deg,#ffff04 300.5deg,#ffff03 300.75deg,#ffff02 301deg,#ffff01 301.25deg,#ffff00 301.5deg,#ffff00 360deg),#fff;background-blend-mode:darken,darken,darken,normal;"></div><div class="a" style="left:0;top:0;width:210px;height:162.5px;background:rgba(0,0,0,0.404);clip-path:polygon(-31.5px -2.5px,241.5px 165.2px,241.5px -1124.0px,-31.5px -1124.0px)"></div><svg class="a" style="left:0;top:0" width="210" height="162.5" viewBox="0 0 210 162.5"><rect x="97.7" y="75.7" width="12.6" height="11.6" fill="none" stroke="#fff" stroke-width="1.4"/><rect x="183.7" y="150.8" width="12.6" height="11.6" fill="none" stroke="#fff" stroke-width="1.4"/><ellipse cx="143.5" cy="12.0" rx="4.3" ry="3.45" fill="#ffff00" stroke="#000" stroke-width="1.1"/><ellipse cx="11.5" cy="49.0" rx="4.3" ry="3.45" fill="#9dbc40" stroke="#000" stroke-width="1.1"/></svg></div>
<div style="left:1373px;top:133px;width:210px;height:162.5px;border:1px solid rgba(170,170,170,.85);box-sizing:border-box;"></div>
<svg class="a" style="left:968px;top:127px" width="622" height="435" viewBox="0 0 622 435"><rect x="214.6" y="118.1" width="12.6" height="11.6" fill="none" stroke="#fff" stroke-width="1.4"/><rect x="218.7" y="174.6" width="12.6" height="11.6" fill="none" stroke="#fff" stroke-width="1.4"/><rect x="270.7" y="173.2" width="12.6" height="11.6" fill="none" stroke="#fff" stroke-width="1.4"/><rect x="244.7" y="206.6" width="12.6" height="11.6" fill="none" stroke="#fff" stroke-width="1.4"/><rect x="187.2" y="241.7" width="12.6" height="11.6" fill="none" stroke="#fff" stroke-width="1.4"/><rect x="159.7" y="258.6" width="12.6" height="11.6" fill="none" stroke="#fff" stroke-width="1.4"/><rect x="273.7" y="243.6" width="12.6" height="11.6" fill="none" stroke="#fff" stroke-width="1.4"/><rect x="289.4" y="239.1" width="12.6" height="11.6" fill="none" stroke="#fff" stroke-width="1.4"/><rect x="146.8" y="288.7" width="12.6" height="11.6" fill="none" stroke="#fff" stroke-width="1.4"/><rect x="178.2" y="290.6" width="12.6" height="11.6" fill="none" stroke="#fff" stroke-width="1.4"/><rect x="191.3" y="296.7" width="12.6" height="11.6" fill="none" stroke="#fff" stroke-width="1.4"/><rect x="208.2" y="313.6" width="12.6" height="11.6" fill="none" stroke="#fff" stroke-width="1.4"/><rect x="153.7" y="328.7" width="12.6" height="11.6" fill="none" stroke="#fff" stroke-width="1.4"/><rect x="135.3" y="355.8" width="12.6" height="11.6" fill="none" stroke="#fff" stroke-width="1.4"/><rect x="230.3" y="348.2" width="12.6" height="11.6" fill="none" stroke="#fff" stroke-width="1.4"/><rect x="269.7" y="300.6" width="12.6" height="11.6" fill="none" stroke="#fff" stroke-width="1.4"/><rect x="103.7" y="396.2" width="12.6" height="11.6" fill="none" stroke="#fff" stroke-width="1.4"/><rect x="303.7" y="167.2" width="12.6" height="11.6" fill="none" stroke="#fff" stroke-width="1.4"/><rect x="324.3" y="182.7" width="12.6" height="11.6" fill="none" stroke="#fff" stroke-width="1.4"/><rect x="343.7" y="200.7" width="12.6" height="11.6" fill="none" stroke="#fff" stroke-width="1.4"/><rect x="372.7" y="217.7" width="12.6" height="11.6" fill="none" stroke="#fff" stroke-width="1.4"/><rect x="334.7" y="266.7" width="12.6" height="11.6" fill="none" stroke="#fff" stroke-width="1.4"/><rect x="390.7" y="264.6" width="12.6" height="11.6" fill="none" stroke="#fff" stroke-width="1.4"/><rect x="466.9" y="257.3" width="12.6" height="11.6" fill="none" stroke="#fff" stroke-width="1.4"/><rect x="225.2" y="258.8" width="12.6" height="11.2" fill="none" stroke="#000" stroke-width="2.4"/><rect x="226.9" y="260.5" width="9.2" height="7.8" fill="none" stroke="#fff" stroke-width="1"/><ellipse cx="243.5" cy="112.0" rx="4.3" ry="3.45" fill="#00ff00" stroke="#000" stroke-width="1.1"/><ellipse cx="241.5" cy="170.5" rx="4.3" ry="3.45" fill="#469449" stroke="#000" stroke-width="1.1"/><ellipse cx="287.5" cy="166.0" rx="4.3" ry="3.45" fill="#9dbc40" stroke="#000" stroke-width="1.1"/><ellipse cx="256.5" cy="204.0" rx="4.3" ry="3.45" fill="#576c43" stroke="#000" stroke-width="1.1"/><ellipse cx="200.5" cy="246.0" rx="4.3" ry="3.45" fill="#67bdaa" stroke="#000" stroke-width="1.1"/><ellipse cx="173.9" cy="264.0" rx="4.3" ry="3.45" fill="#00ffff" stroke="#000" stroke-width="1.1"/><ellipse cx="232.6" cy="263.2" rx="4.3" ry="3.45" fill="#e8e8e8" stroke="#000" stroke-width="1.1"/><ellipse cx="228.5" cy="262.8" rx="4.3" ry="3.45" fill="#9e9e9e" stroke="#000" stroke-width="1.1"/><ellipse cx="275.5" cy="246.0" rx="4.3" ry="3.45" fill="#c29682" stroke="#000" stroke-width="1.1"/><ellipse cx="161.0" cy="293.0" rx="4.3" ry="3.45" fill="#0885a1" stroke="#000" stroke-width="1.1"/><ellipse cx="183.5" cy="298.5" rx="4.3" ry="3.45" fill="#627a9d" stroke="#000" stroke-width="1.1"/><ellipse cx="194.5" cy="304.9" rx="4.3" ry="3.45" fill="#8580b1" stroke="#000" stroke-width="1.1"/><ellipse cx="192.6" cy="313.0" rx="4.3" ry="3.45" fill="#000000" stroke="#000" stroke-width="1.1"/><ellipse cx="196.5" cy="327.4" rx="4.3" ry="3.45" fill="#5e3c6c" stroke="#000" stroke-width="1.1"/><ellipse cx="159.5" cy="337.0" rx="4.3" ry="3.45" fill="#505ba6" stroke="#000" stroke-width="1.1"/><ellipse cx="137.5" cy="365.9" rx="4.3" ry="3.45" fill="#383d96" stroke="#000" stroke-width="1.1"/><ellipse cx="221.0" cy="358.9" rx="4.3" ry="3.45" fill="#ff00ff" stroke="#000" stroke-width="1.1"/><ellipse cx="262.5" cy="309.8" rx="4.3" ry="3.45" fill="#bb5695" stroke="#000" stroke-width="1.1"/><ellipse cx="112.5" cy="401.6" rx="4.3" ry="3.45" fill="#0000ff" stroke="#000" stroke-width="1.1"/><ellipse cx="318.5" cy="157.4" rx="4.3" ry="3.45" fill="#ffff00" stroke="#000" stroke-width="1.1"/><ellipse cx="335.5" cy="172.0" rx="4.3" ry="3.45" fill="#e7c71f" stroke="#000" stroke-width="1.1"/><ellipse cx="354.0" cy="191.8" rx="4.3" ry="3.45" fill="#e0a32e" stroke="#000" stroke-width="1.1"/><ellipse cx="382.5" cy="209.9" rx="4.3" ry="3.45" fill="#d67e2c" stroke="#000" stroke-width="1.1"/><ellipse cx="300.5" cy="237.9" rx="4.3" ry="3.45" fill="#735244" stroke="#000" stroke-width="1.1"/><ellipse cx="331.5" cy="271.4" rx="4.3" ry="3.45" fill="#c15a63" stroke="#000" stroke-width="1.1"/><ellipse cx="397.6" cy="266.4" rx="4.3" ry="3.45" fill="#af363c" stroke="#000" stroke-width="1.1"/><ellipse cx="479.8" cy="256.1" rx="4.3" ry="3.45" fill="#ff0000" stroke="#000" stroke-width="1.1"/></svg>
<div id="tbl" style="left:308px;top:605px;width:1290px;height:199px;overflow:hidden"><div class="a" style="left:0;top:0;width:1290px;height:25px;background:linear-gradient(#303030 0,#2e2e2e 50%,#191919 52%,#1b1b1b 80%,#222 100%)"></div><div class="a" style="left:0;top:0;width:10px;height:25px;background:#000"></div><div class="a" style="left:10px;top:25px;width:1280px;height:23px;background:#414141"></div><div class="a" style="left:0;top:25px;width:10px;height:23px;background:#2a2a2a"></div><div class="a" style="left:10px;top:48px;width:1280px;height:23px;background:#808080"></div><div class="a" style="left:0;top:48px;width:10px;height:23px;background:#303030"></div><div class="a" style="left:10px;top:71px;width:1280px;height:22px;background:#414141"></div><div class="a" style="left:0;top:71px;width:10px;height:22px;background:#2a2a2a"></div><div class="a" style="left:10px;top:93px;width:1280px;height:23px;background:#808080"></div><div class="a" style="left:0;top:93px;width:10px;height:23px;background:#303030"></div><div class="a" style="left:10px;top:116px;width:1280px;height:23px;background:#414141"></div><div class="a" style="left:0;top:116px;width:10px;height:23px;background:#2a2a2a"></div><div class="a" style="left:10px;top:139px;width:1280px;height:23px;background:#808080"></div><div class="a" style="left:0;top:139px;width:10px;height:23px;background:#303030"></div><div class="a" style="left:10px;top:162px;width:1280px;height:22px;background:#414141"></div><div class="a" style="left:0;top:162px;width:10px;height:22px;background:#2a2a2a"></div><div class="a" style="left:540.8px;top:93.79999999999995px;width:60.6px;height:21.4px;background:#fff"></div><span class="t" style="left:86.40px;top:7px;font-size:13px;transform:scaleX(0.8004);color:#f2f2f2;">White</span><span class="t" style="left:124.60px;top:7px;font-size:13px;transform:scaleX(0.7308);color:#f2f2f2;">Gray 80</span><span class="t" style="left:164.00px;top:7px;font-size:13px;transform:scaleX(0.7351);color:#f2f2f2;">Gray 65</span><span class="t" style="left:203.60px;top:7px;font-size:13px;transform:scaleX(0.7351);color:#f2f2f2;">Gray 50</span><span class="t" style="left:243.40px;top:7px;font-size:13px;transform:scaleX(0.7265);color:#f2f2f2;">Gray 35</span><span class="t" style="left:283.20px;top:7px;font-size:13px;transform:scaleX(0.7013);color:#f2f2f2;">Black</span><span class="t" style="left:312.00px;top:7px;font-size:13px;transform:scaleX(0.7275);color:#f2f2f2;">Dark Skin</span><span class="t" style="left:359.00px;top:7px;font-size:13px;transform:scaleX(0.7356);color:#f2f2f2;">Light Skin</span><span class="t" style="left:406.60px;top:7px;font-size:13px;transform:scaleX(0.7211);color:#f2f2f2;">Blue Sky</span><span class="t" style="left:449.40px;top:7px;font-size:13px;transform:scaleX(0.7153);color:#f2f2f2;">Foliage</span><span class="t" style="left:486.40px;top:7px;font-size:13px;transform:scaleX(0.7605);color:#f2f2f2;">Blue Flower</span><span class="t" style="left:544.40px;top:7px;font-size:13px;transform:scaleX(0.7385);color:#f2f2f2;">Bluish Green</span><span class="t" style="left:606.00px;top:7px;font-size:13px;transform:scaleX(0.7378);color:#f2f2f2;">Orange</span><span class="t" style="left:644.40px;top:7px;font-size:13px;transform:scaleX(0.7519);color:#f2f2f2;">Purplish Blue</span><span class="t" style="left:707.60px;top:7px;font-size:13px;transform:scaleX(0.7695);color:#f2f2f2;">Moderate Red</span><span class="t" style="left:776.80px;top:7px;font-size:13px;transform:scaleX(0.7558);color:#f2f2f2;">Purple</span><span class="t" style="left:811.40px;top:7px;font-size:13px;transform:scaleX(0.7520);color:#f2f2f2;">Yellow Green</span><span class="t" style="left:875.00px;top:7px;font-size:13px;transform:scaleX(0.7514);color:#f2f2f2;">Orange Yellow</span><span class="t" style="left:944.00px;top:7px;font-size:13px;transform:scaleX(0.7299);color:#f2f2f2;">Blue</span><span class="t" style="left:976.30px;top:7px;font-size:13px;transform:scaleX(0.7415);color:#f2f2f2;">Green</span><span class="t" style="left:1009.30px;top:7px;font-size:13px;transform:scaleX(0.7000);color:#f2f2f2;">Red</span><span class="t" style="left:1041.50px;top:7px;font-size:13px;transform:scaleX(0.7545);color:#f2f2f2;">Yellow</span><span class="t" style="left:1080.00px;top:7px;font-size:13px;transform:scaleX(0.7708);color:#f2f2f2;">Magenta</span><span class="t" style="left:1125.00px;top:7px;font-size:13px;transform:scaleX(0.7000);color:#f2f2f2;">Cyan</span><span class="t" style="left:1157.60px;top:7px;font-size:13px;transform:scaleX(0.7082);color:#f2f2f2;">100% Red</span><span class="t" style="left:1206.60px;top:7px;font-size:13px;transform:scaleX(0.7315);color:#f2f2f2;">100% Green</span><span class="t" style="left:1266.60px;top:7px;font-size:13px;transform:scaleX(0.7235);color:#f2f2f2;">100% Blue</span><span class="t" style="left:12.00px;top:31px;font-size:13px;transform:scaleX(0.7401);color:#f2f2f2;">x: CIE31</span><span class="t" style="left:86.10px;top:31px;font-size:13px;transform:scaleX(0.7900);color:#f2f2f2;">0.31</span><span class="t" style="left:124.30px;top:31px;font-size:13px;transform:scaleX(0.7900);color:#f2f2f2;">0.31</span><span class="t" style="left:163.70px;top:31px;font-size:13px;transform:scaleX(0.7900);color:#f2f2f2;">0.31</span><span class="t" style="left:203.30px;top:31px;font-size:13px;transform:scaleX(0.7900);color:#f2f2f2;">0.31</span><span class="t" style="left:243.10px;top:31px;font-size:13px;transform:scaleX(0.7900);color:#f2f2f2;">0.31</span><span class="t" style="left:282.90px;top:31px;font-size:13px;transform:scaleX(0.7900);color:#f2f2f2;">0.26</span><span class="t" style="left:311.70px;top:31px;font-size:13px;transform:scaleX(0.7900);color:#f2f2f2;">0.41</span><span class="t" style="left:358.70px;top:31px;font-size:13px;transform:scaleX(0.7900);color:#f2f2f2;">0.37</span><span class="t" style="left:406.30px;top:31px;font-size:13px;transform:scaleX(0.7900);color:#f2f2f2;">0.25</span><span class="t" style="left:449.10px;top:31px;font-size:13px;transform:scaleX(0.7900);color:#f2f2f2;">0.35</span><span class="t" style="left:486.10px;top:31px;font-size:13px;transform:scaleX(0.7900);color:#f2f2f2;">0.26</span><span class="t" style="left:544.10px;top:31px;font-size:13px;transform:scaleX(0.7900);color:#f2f2f2;">0.27</span><span class="t" style="left:605.70px;top:31px;font-size:13px;transform:scaleX(0.7900);color:#f2f2f2;">0.52</span><span class="t" style="left:644.10px;top:31px;font-size:13px;transform:scaleX(0.7900);color:#f2f2f2;">0.22</span><span class="t" style="left:707.30px;top:31px;font-size:13px;transform:scaleX(0.7900);color:#f2f2f2;">0.45</span><span class="t" style="left:776.50px;top:31px;font-size:13px;transform:scaleX(0.7900);color:#f2f2f2;">0.27</span><span class="t" style="left:811.10px;top:31px;font-size:13px;transform:scaleX(0.7900);color:#f2f2f2;">0.39</span><span class="t" style="left:874.70px;top:31px;font-size:13px;transform:scaleX(0.7900);color:#f2f2f2;">0.48</span><span class="t" style="left:943.70px;top:31px;font-size:13px;transform:scaleX(0.7900);color:#f2f2f2;">0.19</span><span class="t" style="left:976.00px;top:31px;font-size:13px;transform:scaleX(0.7900);color:#f2f2f2;">0.33</span><span class="t" style="left:1009.00px;top:31px;font-size:13px;transform:scaleX(0.7900);color:#f2f2f2;">0.54</span><span class="t" style="left:1041.20px;top:31px;font-size:13px;transform:scaleX(0.7900);color:#f2f2f2;">0.45</span><span class="t" style="left:1079.70px;top:31px;font-size:13px;transform:scaleX(0.7900);color:#f2f2f2;">0.36</span><span class="t" style="left:1124.70px;top:31px;font-size:13px;transform:scaleX(0.7900);color:#f2f2f2;">0.22</span><span class="t" style="left:1157.30px;top:31px;font-size:13px;transform:scaleX(0.7900);color:#f2f2f2;">0.65</span><span class="t" style="left:1206.30px;top:31px;font-size:13px;transform:scaleX(0.7900);color:#f2f2f2;">0.33</span><span class="t" style="left:1266.30px;top:31px;font-size:13px;transform:scaleX(0.7900);color:#f2f2f2;">0.15</span><span class="t" style="left:12.00px;top:54px;font-size:13px;transform:scaleX(0.7401);color:#f2f2f2;">y: CIE31</span><span class="t" style="left:86.10px;top:54px;font-size:13px;transform:scaleX(0.7900);color:#f2f2f2;">0.33</span><span class="t" style="left:124.30px;top:54px;font-size:13px;transform:scaleX(0.7900);color:#f2f2f2;">0.33</span><span class="t" style="left:163.70px;top:54px;font-size:13px;transform:scaleX(0.7900);color:#f2f2f2;">0.33</span><span class="t" style="left:203.30px;top:54px;font-size:13px;transform:scaleX(0.7900);color:#f2f2f2;">0.33</span><span class="t" style="left:243.10px;top:54px;font-size:13px;transform:scaleX(0.7900);color:#f2f2f2;">0.33</span><span class="t" style="left:282.90px;top:54px;font-size:13px;transform:scaleX(0.7900);color:#f2f2f2;">0.23</span><span class="t" style="left:311.70px;top:54px;font-size:13px;transform:scaleX(0.7900);color:#f2f2f2;">0.38</span><span class="t" style="left:358.70px;top:54px;font-size:13px;transform:scaleX(0.7900);color:#f2f2f2;">0.36</span><span class="t" style="left:406.30px;top:54px;font-size:13px;transform:scaleX(0.7900);color:#f2f2f2;">0.26</span><span class="t" style="left:449.10px;top:54px;font-size:13px;transform:scaleX(0.7900);color:#f2f2f2;">0.44</span><span class="t" style="left:486.10px;top:54px;font-size:13px;transform:scaleX(0.7900);color:#f2f2f2;">0.25</span><span class="t" style="left:544.10px;top:54px;font-size:13px;transform:scaleX(0.7900);color:#f2f2f2;">0.36</span><span class="t" style="left:605.70px;top:54px;font-size:13px;transform:scaleX(0.7900);color:#f2f2f2;">0.43</span><span class="t" style="left:644.10px;top:54px;font-size:13px;transform:scaleX(0.7900);color:#f2f2f2;">0.19</span><span class="t" style="left:707.30px;top:54px;font-size:13px;transform:scaleX(0.7900);color:#f2f2f2;">0.31</span><span class="t" style="left:776.50px;top:54px;font-size:13px;transform:scaleX(0.7900);color:#f2f2f2;">0.20</span><span class="t" style="left:811.10px;top:54px;font-size:13px;transform:scaleX(0.7900);color:#f2f2f2;">0.52</span><span class="t" style="left:874.70px;top:54px;font-size:13px;transform:scaleX(0.7900);color:#f2f2f2;">0.47</span><span class="t" style="left:943.70px;top:54px;font-size:13px;transform:scaleX(0.7900);color:#f2f2f2;">0.13</span><span class="t" style="left:976.00px;top:54px;font-size:13px;transform:scaleX(0.7900);color:#f2f2f2;">0.51</span><span class="t" style="left:1009.00px;top:54px;font-size:13px;transform:scaleX(0.7900);color:#f2f2f2;">0.32</span><span class="t" style="left:1041.20px;top:54px;font-size:13px;transform:scaleX(0.7900);color:#f2f2f2;">0.51</span><span class="t" style="left:1079.70px;top:54px;font-size:13px;transform:scaleX(0.7900);color:#f2f2f2;">0.24</span><span class="t" style="left:1124.70px;top:54px;font-size:13px;transform:scaleX(0.7900);color:#f2f2f2;">0.27</span><span class="t" style="left:1157.30px;top:54px;font-size:13px;transform:scaleX(0.7900);color:#f2f2f2;">0.34</span><span class="t" style="left:1206.30px;top:54px;font-size:13px;transform:scaleX(0.7900);color:#f2f2f2;">0.62</span><span class="t" style="left:1266.30px;top:54px;font-size:13px;transform:scaleX(0.7900);color:#f2f2f2;">0.06</span><span class="t" style="left:12.00px;top:76px;font-size:13px;transform:scaleX(0.7150);color:#f2f2f2;">Y</span><span class="t" style="left:86.10px;top:76px;font-size:13px;transform:scaleX(0.7900);color:#f2f2f2;">330.49</span><span class="t" style="left:124.30px;top:76px;font-size:13px;transform:scaleX(0.7900);color:#f2f2f2;">264.02</span><span class="t" style="left:163.70px;top:76px;font-size:13px;transform:scaleX(0.7900);color:#f2f2f2;">214.54</span><span class="t" style="left:203.30px;top:76px;font-size:13px;transform:scaleX(0.7900);color:#f2f2f2;">165.02</span><span class="t" style="left:243.10px;top:76px;font-size:13px;transform:scaleX(0.7900);color:#f2f2f2;">115.52</span><span class="t" style="left:282.90px;top:76px;font-size:13px;transform:scaleX(0.7900);color:#f2f2f2;">0.26</span><span class="t" style="left:311.70px;top:76px;font-size:13px;transform:scaleX(0.7900);color:#f2f2f2;">31.83</span><span class="t" style="left:358.70px;top:76px;font-size:13px;transform:scaleX(0.7900);color:#f2f2f2;">115.74</span><span class="t" style="left:406.30px;top:76px;font-size:13px;transform:scaleX(0.7900);color:#f2f2f2;">63.91</span><span class="t" style="left:449.10px;top:76px;font-size:13px;transform:scaleX(0.7900);color:#f2f2f2;">42.95</span><span class="t" style="left:486.10px;top:76px;font-size:13px;transform:scaleX(0.7900);color:#f2f2f2;">79.54</span><span class="t" style="left:544.10px;top:76px;font-size:13px;transform:scaleX(0.7900);color:#f2f2f2;">144.39</span><span class="t" style="left:605.70px;top:76px;font-size:13px;transform:scaleX(0.7900);color:#f2f2f2;">88.55</span><span class="t" style="left:644.10px;top:76px;font-size:13px;transform:scaleX(0.7900);color:#f2f2f2;">40.55</span><span class="t" style="left:707.30px;top:76px;font-size:13px;transform:scaleX(0.7900);color:#f2f2f2;">57.42</span><span class="t" style="left:776.50px;top:76px;font-size:13px;transform:scaleX(0.7900);color:#f2f2f2;">19.44</span><span class="t" style="left:811.10px;top:76px;font-size:13px;transform:scaleX(0.7900);color:#f2f2f2;">143.81</span><span class="t" style="left:874.70px;top:76px;font-size:13px;transform:scaleX(0.7900);color:#f2f2f2;">138.51</span><span class="t" style="left:943.70px;top:76px;font-size:13px;transform:scaleX(0.7900);color:#f2f2f2;">20.28</span><span class="t" style="left:976.00px;top:76px;font-size:13px;transform:scaleX(0.7900);color:#f2f2f2;">79.08</span><span class="t" style="left:1009.00px;top:76px;font-size:13px;transform:scaleX(0.7900);color:#f2f2f2;">34.28</span><span class="t" style="left:1041.20px;top:76px;font-size:13px;transform:scaleX(0.7900);color:#f2f2f2;">193.68</span><span class="t" style="left:1079.70px;top:76px;font-size:13px;transform:scaleX(0.7900);color:#f2f2f2;">58.30</span><span class="t" style="left:1124.70px;top:76px;font-size:13px;transform:scaleX(0.7900);color:#f2f2f2;">69.25</span><span class="t" style="left:1157.30px;top:76px;font-size:13px;transform:scaleX(0.7900);color:#f2f2f2;">62.32</span><span class="t" style="left:1206.30px;top:76px;font-size:13px;transform:scaleX(0.7900);color:#f2f2f2;">242.22</span><span class="t" style="left:1266.30px;top:76px;font-size:13px;transform:scaleX(0.7900);color:#f2f2f2;">26.32</span><span class="t" style="left:12.00px;top:99px;font-size:13px;transform:scaleX(0.7744);color:#f2f2f2;">Target x:CIE31</span><span class="t" style="left:86.10px;top:99px;font-size:13px;transform:scaleX(0.7900);color:#f2f2f2;">0.31</span><span class="t" style="left:124.30px;top:99px;font-size:13px;transform:scaleX(0.7900);color:#f2f2f2;">0.31</span><span class="t" style="left:163.70px;top:99px;font-size:13px;transform:scaleX(0.7900);color:#f2f2f2;">0.31</span><span class="t" style="left:203.30px;top:99px;font-size:13px;transform:scaleX(0.7900);color:#f2f2f2;">0.31</span><span class="t" style="left:243.10px;top:99px;font-size:13px;transform:scaleX(0.7900);color:#f2f2f2;">0.31</span><span class="t" style="left:282.90px;top:99px;font-size:13px;transform:scaleX(0.7900);color:#f2f2f2;">0.31</span><span class="t" style="left:311.70px;top:99px;font-size:13px;transform:scaleX(0.7900);color:#f2f2f2;">0.40</span><span class="t" style="left:358.70px;top:99px;font-size:13px;transform:scaleX(0.7900);color:#f2f2f2;">0.38</span><span class="t" style="left:406.30px;top:99px;font-size:13px;transform:scaleX(0.7900);color:#f2f2f2;">0.25</span><span class="t" style="left:449.10px;top:99px;font-size:13px;transform:scaleX(0.7900);color:#f2f2f2;">0.34</span><span class="t" style="left:486.10px;top:99px;font-size:13px;transform:scaleX(0.7900);color:#f2f2f2;">0.27</span><span class="t" style="left:544.10px;top:99px;font-size:13px;transform:scaleX(0.7900);color:#000;">0.26</span><span class="t" style="left:605.70px;top:99px;font-size:13px;transform:scaleX(0.7900);color:#f2f2f2;">0.51</span><span class="t" style="left:644.10px;top:99px;font-size:13px;transform:scaleX(0.7900);color:#f2f2f2;">0.22</span><span class="t" style="left:707.30px;top:99px;font-size:13px;transform:scaleX(0.7900);color:#f2f2f2;">0.46</span><span class="t" style="left:776.50px;top:99px;font-size:13px;transform:scaleX(0.7900);color:#f2f2f2;">0.29</span><span class="t" style="left:811.10px;top:99px;font-size:13px;transform:scaleX(0.7900);color:#f2f2f2;">0.38</span><span class="t" style="left:874.70px;top:99px;font-size:13px;transform:scaleX(0.7900);color:#f2f2f2;">0.47</span><span class="t" style="left:943.70px;top:99px;font-size:13px;transform:scaleX(0.7900);color:#f2f2f2;">0.19</span><span class="t" style="left:976.00px;top:99px;font-size:13px;transform:scaleX(0.7900);color:#f2f2f2;">0.31</span><span class="t" style="left:1009.00px;top:99px;font-size:13px;transform:scaleX(0.7900);color:#f2f2f2;">0.54</span><span class="t" style="left:1041.20px;top:99px;font-size:13px;transform:scaleX(0.7900);color:#f2f2f2;">0.45</span><span class="t" style="left:1079.70px;top:99px;font-size:13px;transform:scaleX(0.7900);color:#f2f2f2;">0.37</span><span class="t" style="left:1124.70px;top:99px;font-size:13px;transform:scaleX(0.7900);color:#f2f2f2;">0.21</span><span class="t" style="left:1157.30px;top:99px;font-size:13px;transform:scaleX(0.7900);color:#f2f2f2;">0.64</span><span class="t" style="left:1206.30px;top:99px;font-size:13px;transform:scaleX(0.7900);color:#f2f2f2;">0.30</span><span class="t" style="left:1266.30px;top:99px;font-size:13px;transform:scaleX(0.7900);color:#f2f2f2;">0.15</span><span class="t" style="left:12.00px;top:122px;font-size:13px;transform:scaleX(0.7767);color:#f2f2f2;">Target y:CIE31</span><span class="t" style="left:86.10px;top:122px;font-size:13px;transform:scaleX(0.7900);color:#f2f2f2;">0.33</span><span class="t" style="left:124.30px;top:122px;font-size:13px;transform:scaleX(0.7900);color:#f2f2f2;">0.33</span><span class="t" style="left:163.70px;top:122px;font-size:13px;transform:scaleX(0.7900);color:#f2f2f2;">0.33</span><span class="t" style="left:203.30px;top:122px;font-size:13px;transform:scaleX(0.7900);color:#f2f2f2;">0.33</span><span class="t" style="left:243.10px;top:122px;font-size:13px;transform:scaleX(0.7900);color:#f2f2f2;">0.33</span><span class="t" style="left:282.90px;top:122px;font-size:13px;transform:scaleX(0.7900);color:#f2f2f2;">0.33</span><span class="t" style="left:311.70px;top:122px;font-size:13px;transform:scaleX(0.7900);color:#f2f2f2;">0.36</span><span class="t" style="left:358.70px;top:122px;font-size:13px;transform:scaleX(0.7900);color:#f2f2f2;">0.36</span><span class="t" style="left:406.30px;top:122px;font-size:13px;transform:scaleX(0.7900);color:#f2f2f2;">0.27</span><span class="t" style="left:449.10px;top:122px;font-size:13px;transform:scaleX(0.7900);color:#f2f2f2;">0.43</span><span class="t" style="left:486.10px;top:122px;font-size:13px;transform:scaleX(0.7900);color:#f2f2f2;">0.25</span><span class="t" style="left:544.10px;top:122px;font-size:13px;transform:scaleX(0.7900);color:#f2f2f2;">0.36</span><span class="t" style="left:605.70px;top:122px;font-size:13px;transform:scaleX(0.7900);color:#f2f2f2;">0.41</span><span class="t" style="left:644.10px;top:122px;font-size:13px;transform:scaleX(0.7900);color:#f2f2f2;">0.19</span><span class="t" style="left:707.30px;top:122px;font-size:13px;transform:scaleX(0.7900);color:#f2f2f2;">0.31</span><span class="t" style="left:776.50px;top:122px;font-size:13px;transform:scaleX(0.7900);color:#f2f2f2;">0.22</span><span class="t" style="left:811.10px;top:122px;font-size:13px;transform:scaleX(0.7900);color:#f2f2f2;">0.49</span><span class="t" style="left:874.70px;top:122px;font-size:13px;transform:scaleX(0.7900);color:#f2f2f2;">0.44</span><span class="t" style="left:943.70px;top:122px;font-size:13px;transform:scaleX(0.7900);color:#f2f2f2;">0.14</span><span class="t" style="left:976.00px;top:122px;font-size:13px;transform:scaleX(0.7900);color:#f2f2f2;">0.49</span><span class="t" style="left:1009.00px;top:122px;font-size:13px;transform:scaleX(0.7900);color:#f2f2f2;">0.32</span><span class="t" style="left:1041.20px;top:122px;font-size:13px;transform:scaleX(0.7900);color:#f2f2f2;">0.47</span><span class="t" style="left:1079.70px;top:122px;font-size:13px;transform:scaleX(0.7900);color:#f2f2f2;">0.25</span><span class="t" style="left:1124.70px;top:122px;font-size:13px;transform:scaleX(0.7900);color:#f2f2f2;">0.27</span><span class="t" style="left:1157.30px;top:122px;font-size:13px;transform:scaleX(0.7900);color:#f2f2f2;">0.33</span><span class="t" style="left:1206.30px;top:122px;font-size:13px;transform:scaleX(0.7900);color:#f2f2f2;">0.60</span><span class="t" style="left:1266.30px;top:122px;font-size:13px;transform:scaleX(0.7900);color:#f2f2f2;">0.06</span><span class="t" style="left:12.00px;top:145px;font-size:13px;transform:scaleX(0.8197);color:#f2f2f2;">Target Y</span><span class="t" style="left:86.10px;top:145px;font-size:13px;transform:scaleX(0.7900);color:#f2f2f2;">330.49</span><span class="t" style="left:124.30px;top:145px;font-size:13px;transform:scaleX(0.7900);color:#f2f2f2;">261.52</span><span class="t" style="left:163.70px;top:145px;font-size:13px;transform:scaleX(0.7900);color:#f2f2f2;">210.72</span><span class="t" style="left:203.30px;top:145px;font-size:13px;transform:scaleX(0.7900);color:#f2f2f2;">162.28</span><span class="t" style="left:243.10px;top:145px;font-size:13px;transform:scaleX(0.7900);color:#f2f2f2;">113.00</span><span class="t" style="left:282.90px;top:145px;font-size:13px;transform:scaleX(0.7900);color:#f2f2f2;">0.00</span><span class="t" style="left:311.70px;top:145px;font-size:13px;transform:scaleX(0.7900);color:#f2f2f2;">33.29</span><span class="t" style="left:358.70px;top:145px;font-size:13px;transform:scaleX(0.7900);color:#f2f2f2;">115.33</span><span class="t" style="left:406.30px;top:145px;font-size:13px;transform:scaleX(0.7900);color:#f2f2f2;">61.80</span><span class="t" style="left:449.10px;top:145px;font-size:13px;transform:scaleX(0.7900);color:#f2f2f2;">43.07</span><span class="t" style="left:486.10px;top:145px;font-size:13px;transform:scaleX(0.7900);color:#f2f2f2;">77.07</span><span class="t" style="left:544.10px;top:145px;font-size:13px;transform:scaleX(0.7900);color:#f2f2f2;">138.39</span><span class="t" style="left:605.70px;top:145px;font-size:13px;transform:scaleX(0.7900);color:#f2f2f2;">93.69</span><span class="t" style="left:644.10px;top:145px;font-size:13px;transform:scaleX(0.7900);color:#f2f2f2;">38.85</span><span class="t" style="left:707.30px;top:145px;font-size:13px;transform:scaleX(0.7900);color:#f2f2f2;">61.72</span><span class="t" style="left:776.50px;top:145px;font-size:13px;transform:scaleX(0.7900);color:#f2f2f2;">22.06</span><span class="t" style="left:811.10px;top:145px;font-size:13px;transform:scaleX(0.7900);color:#f2f2f2;">141.31</span><span class="t" style="left:874.70px;top:145px;font-size:13px;transform:scaleX(0.7900);color:#f2f2f2;">140.50</span><span class="t" style="left:943.70px;top:145px;font-size:13px;transform:scaleX(0.7900);color:#f2f2f2;">20.63</span><span class="t" style="left:976.00px;top:145px;font-size:13px;transform:scaleX(0.7900);color:#f2f2f2;">75.93</span><span class="t" style="left:1009.00px;top:145px;font-size:13px;transform:scaleX(0.7900);color:#f2f2f2;">38.54</span><span class="t" style="left:1041.20px;top:145px;font-size:13px;transform:scaleX(0.7900);color:#f2f2f2;">194.87</span><span class="t" style="left:1079.70px;top:145px;font-size:13px;transform:scaleX(0.7900);color:#f2f2f2;">62.22</span><span class="t" style="left:1124.70px;top:145px;font-size:13px;transform:scaleX(0.7900);color:#f2f2f2;">64.18</span><span class="t" style="left:1157.30px;top:145px;font-size:13px;transform:scaleX(0.7900);color:#f2f2f2;">70.28</span><span class="t" style="left:1206.30px;top:145px;font-size:13px;transform:scaleX(0.7900);color:#f2f2f2;">236.36</span><span class="t" style="left:1266.30px;top:145px;font-size:13px;transform:scaleX(0.7900);color:#f2f2f2;">23.86</span><span class="t" style="left:12.00px;top:167px;font-size:13px;transform:scaleX(0.7917);color:#f2f2f2;">ΔE 2000</span><span class="t" style="left:86.10px;top:167px;font-size:13px;transform:scaleX(0.7900);color:#f2f2f2;">2.02</span><span class="t" style="left:124.30px;top:167px;font-size:13px;transform:scaleX(0.7900);color:#f2f2f2;">3.04</span><span class="t" style="left:163.70px;top:167px;font-size:13px;transform:scaleX(0.7900);color:#f2f2f2;">3.65</span><span class="t" style="left:203.30px;top:167px;font-size:13px;transform:scaleX(0.7900);color:#f2f2f2;">3.04</span><span class="t" style="left:243.10px;top:167px;font-size:13px;transform:scaleX(0.7900);color:#f2f2f2;">2.10</span><span class="t" style="left:282.90px;top:167px;font-size:13px;transform:scaleX(0.7900);color:#f2f2f2;">1.49</span><span class="t" style="left:311.70px;top:167px;font-size:13px;transform:scaleX(0.7900);color:#f2f2f2;">3.50</span><span class="t" style="left:358.70px;top:167px;font-size:13px;transform:scaleX(0.7900);color:#f2f2f2;">3.95</span><span class="t" style="left:406.30px;top:167px;font-size:13px;transform:scaleX(0.7900);color:#f2f2f2;">1.43</span><span class="t" style="left:449.10px;top:167px;font-size:13px;transform:scaleX(0.7900);color:#f2f2f2;">1.83</span><span class="t" style="left:486.10px;top:167px;font-size:13px;transform:scaleX(0.7900);color:#f2f2f2;">1.25</span><span class="t" style="left:544.10px;top:167px;font-size:13px;transform:scaleX(0.7900);color:#f2f2f2;">1.87</span><span class="t" style="left:605.70px;top:167px;font-size:13px;transform:scaleX(0.7900);color:#f2f2f2;">7.20</span><span class="t" style="left:644.10px;top:167px;font-size:13px;transform:scaleX(0.7900);color:#f2f2f2;">1.66</span><span class="t" style="left:707.30px;top:167px;font-size:13px;transform:scaleX(0.7900);color:#f2f2f2;">2.23</span><span class="t" style="left:776.50px;top:167px;font-size:13px;transform:scaleX(0.7900);color:#f2f2f2;">3.55</span><span class="t" style="left:811.10px;top:167px;font-size:13px;transform:scaleX(0.7900);color:#f2f2f2;">3.38</span><span class="t" style="left:874.70px;top:167px;font-size:13px;transform:scaleX(0.7900);color:#f2f2f2;">6.20</span><span class="t" style="left:943.70px;top:167px;font-size:13px;transform:scaleX(0.7900);color:#f2f2f2;">1.84</span><span class="t" style="left:976.00px;top:167px;font-size:13px;transform:scaleX(0.7900);color:#f2f2f2;">3.77</span><span class="t" style="left:1009.00px;top:167px;font-size:13px;transform:scaleX(0.7900);color:#f2f2f2;">2.51</span><span class="t" style="left:1041.20px;top:167px;font-size:13px;transform:scaleX(0.7900);color:#f2f2f2;">5.10</span><span class="t" style="left:1079.70px;top:167px;font-size:13px;transform:scaleX(0.7900);color:#f2f2f2;">2.75</span><span class="t" style="left:1124.70px;top:167px;font-size:13px;transform:scaleX(0.7900);color:#f2f2f2;">2.44</span><span class="t" style="left:1157.30px;top:167px;font-size:13px;transform:scaleX(0.7900);color:#f2f2f2;">7.39</span><span class="t" style="left:1206.30px;top:167px;font-size:13px;transform:scaleX(0.7900);color:#f2f2f2;">6.05</span><span class="t" style="left:1266.30px;top:167px;font-size:13px;transform:scaleX(0.7900);color:#f2f2f2;">1.32</span><div class="a" style="left:10px;top:184px;width:1280px;height:15px;background:linear-gradient(#5c5c5c,#646464)"></div><div class="a" style="left:22.600000000000023px;top:185.2px;width:1077.4px;height:13px;border-radius:6.5px;background:#434343"></div><div class="a" style="left:10.5px;top:185px;width:10px;height:13px;border-radius:2.5px;background:#7c7c7c"></div><svg class="a" style="left:12.5px;top:187.5px" width="6" height="8" viewBox="0 0 6 8"><path d="M5.6 0.2L0.4 4L5.6 7.8z" fill="#4e4e4e"/></svg><div class="a" style="left:1280px;top:185px;width:10px;height:13px;border-radius:2.5px;background:#7c7c7c"></div><svg class="a" style="left:1282.5px;top:187.5px" width="6" height="8" viewBox="0 0 6 8"><path d="M0.4 0.2L5.6 4L0.4 7.8z" fill="#4e4e4e"/></svg></div>
<div style="left:0px;top:806px;width:1276.6px;height:64px;overflow:hidden;"><div class="a" style="left:0;top:0;width:1277px;height:64px;background:#2b2b2b"></div><div class="a" style="left:1.2px;top:2px;width:49.8px;height:48.6px;border-radius:5px 5px 3px 3px;background:linear-gradient(#9c9c9c 0,#8a8a8a 30%,#6a6a6a 70%,#545454 100%)"></div><div class="a" style="left:6.4px;top:7px;width:40px;height:24px;border-radius:3.5px;background:#ffffff;box-shadow:inset 1.2px 1.2px 0.5px rgba(0,0,0,.22),inset -0.5px -0.5px 0.5px rgba(0,0,0,.08)"></div><span class="t" style="left:11.20px;top:37px;font-size:11px;transform:scaleX(1.0667);color:#1c1c1c;-webkit-text-stroke:.3px #1c1c1c;">White</span><div class="a" style="left:53.2px;top:2px;width:49.8px;height:48.6px;border-radius:5px 5px 3px 3px;background:linear-gradient(#9c9c9c 0,#8a8a8a 30%,#6a6a6a 70%,#545454 100%)"></div><div class="a" style="left:58.4px;top:7px;width:40px;height:24px;border-radius:3.5px;background:#e6e6e6;box-shadow:inset 1.2px 1.2px 0.5px rgba(0,0,0,.22),inset -0.5px -0.5px 0.5px rgba(0,0,0,.08)"></div><span class="t" style="left:59.70px;top:37px;font-size:11px;transform:scaleX(0.9453);color:#1c1c1c;-webkit-text-stroke:.3px #1c1c1c;">Gray 80</span><div class="a" style="left:105.2px;top:2px;width:49.8px;height:48.6px;border-radius:5px 5px 3px 3px;background:linear-gradient(#9c9c9c 0,#8a8a8a 30%,#6a6a6a 70%,#545454 100%)"></div><div class="a" style="left:110.4px;top:7px;width:40px;height:24px;border-radius:3.5px;background:#d2d2d2;box-shadow:inset 1.2px 1.2px 0.5px rgba(0,0,0,.22),inset -0.5px -0.5px 0.5px rgba(0,0,0,.08)"></div><span class="t" style="left:111.70px;top:37px;font-size:11px;transform:scaleX(0.9453);color:#1c1c1c;-webkit-text-stroke:.3px #1c1c1c;">Gray 65</span><div class="a" style="left:157.2px;top:2px;width:49.8px;height:48.6px;border-radius:5px 5px 3px 3px;background:linear-gradient(#9c9c9c 0,#8a8a8a 30%,#6a6a6a 70%,#545454 100%)"></div><div class="a" style="left:162.4px;top:7px;width:40px;height:24px;border-radius:3.5px;background:#bababa;box-shadow:inset 1.2px 1.2px 0.5px rgba(0,0,0,.22),inset -0.5px -0.5px 0.5px rgba(0,0,0,.08)"></div><span class="t" style="left:163.70px;top:37px;font-size:11px;transform:scaleX(0.9453);color:#1c1c1c;-webkit-text-stroke:.3px #1c1c1c;">Gray 50</span><div class="a" style="left:209.2px;top:2px;width:49.8px;height:48.6px;border-radius:5px 5px 3px 3px;background:linear-gradient(#9c9c9c 0,#8a8a8a 30%,#6a6a6a 70%,#545454 100%)"></div><div class="a" style="left:214.4px;top:7px;width:40px;height:24px;border-radius:3.5px;background:#9e9e9e;box-shadow:inset 1.2px 1.2px 0.5px rgba(0,0,0,.22),inset -0.5px -0.5px 0.5px rgba(0,0,0,.08)"></div><span class="t" style="left:215.70px;top:37px;font-size:11px;transform:scaleX(0.9453);color:#1c1c1c;-webkit-text-stroke:.3px #1c1c1c;">Gray 35</span><div class="a" style="left:261.2px;top:2px;width:49.8px;height:48.6px;border-radius:5px 5px 3px 3px;background:linear-gradient(#9c9c9c 0,#8a8a8a 30%,#6a6a6a 70%,#545454 100%)"></div><div class="a" style="left:266.4px;top:7px;width:40px;height:24px;border-radius:3.5px;background:#000000;box-shadow:inset 1.2px 1.2px 0.5px rgba(0,0,0,.22),inset -0.5px -0.5px 0.5px rgba(0,0,0,.08)"></div><span class="t" style="left:273.00px;top:37px;font-size:11px;transform:scaleX(0.9812);color:#1c1c1c;-webkit-text-stroke:.3px #1c1c1c;">Black</span><div class="a" style="left:313.2px;top:2px;width:49.8px;height:48.6px;border-radius:5px 5px 3px 3px;background:linear-gradient(#9c9c9c 0,#8a8a8a 30%,#6a6a6a 70%,#545454 100%)"></div><div class="a" style="left:318.4px;top:7px;width:40px;height:24px;border-radius:3.5px;background:#7a5242;box-shadow:inset 1.2px 1.2px 0.5px rgba(0,0,0,.22),inset -0.5px -0.5px 0.5px rgba(0,0,0,.08)"></div><span class="t" style="left:315.05px;top:37px;font-size:11px;transform:scaleX(0.9709);color:#1c1c1c;-webkit-text-stroke:.3px #1c1c1c;">Dark Skin</span><div class="a" style="left:365.2px;top:2px;width:49.8px;height:48.6px;border-radius:5px 5px 3px 3px;background:linear-gradient(#9c9c9c 0,#8a8a8a 30%,#6a6a6a 70%,#545454 100%)"></div><div class="a" style="left:370.4px;top:7px;width:40px;height:24px;border-radius:3.5px;background:#c59680;box-shadow:inset 1.2px 1.2px 0.5px rgba(0,0,0,.22),inset -0.5px -0.5px 0.5px rgba(0,0,0,.08)"></div><span class="t" style="left:366.65px;top:37px;font-size:11px;transform:scaleX(0.9749);color:#1c1c1c;-webkit-text-stroke:.3px #1c1c1c;">Light Skin</span><div class="a" style="left:417.2px;top:2px;width:49.8px;height:48.6px;border-radius:5px 5px 3px 3px;background:linear-gradient(#9c9c9c 0,#8a8a8a 30%,#6a6a6a 70%,#545454 100%)"></div><div class="a" style="left:422.4px;top:7px;width:40px;height:24px;border-radius:3.5px;background:#5c7ca8;box-shadow:inset 1.2px 1.2px 0.5px rgba(0,0,0,.22),inset -0.5px -0.5px 0.5px rgba(0,0,0,.08)"></div><span class="t" style="left:421.30px;top:37px;font-size:11px;transform:scaleX(0.9626);color:#1c1c1c;-webkit-text-stroke:.3px #1c1c1c;">Blue Sky</span><div class="a" style="left:469.2px;top:2px;width:49.8px;height:48.6px;border-radius:5px 5px 3px 3px;background:linear-gradient(#9c9c9c 0,#8a8a8a 30%,#6a6a6a 70%,#545454 100%)"></div><div class="a" style="left:474.4px;top:7px;width:40px;height:24px;border-radius:3.5px;background:#566c40;box-shadow:inset 1.2px 1.2px 0.5px rgba(0,0,0,.22),inset -0.5px -0.5px 0.5px rgba(0,0,0,.08)"></div><span class="t" style="left:476.95px;top:37px;font-size:11px;transform:scaleX(0.9563);color:#1c1c1c;-webkit-text-stroke:.3px #1c1c1c;">Foliage</span><div class="a" style="left:521.2px;top:2px;width:49.8px;height:48.6px;border-radius:5px 5px 3px 3px;background:linear-gradient(#9c9c9c 0,#8a8a8a 30%,#6a6a6a 70%,#545454 100%)"></div><div class="a" style="left:526.4px;top:7px;width:40px;height:12px;border-radius:3.5px;background:#807ab6;box-shadow:inset 1.2px 1.2px 0.5px rgba(0,0,0,.22),inset -0.5px -0.5px 0.5px rgba(0,0,0,.08)"></div><span class="t" style="left:529.55px;top:25px;font-size:11px;transform:scaleX(0.9850);color:#1c1c1c;-webkit-text-stroke:.3px #1c1c1c;">Blue</span><span class="t" style="left:529.55px;top:37px;font-size:11px;transform:scaleX(1.0086);color:#1c1c1c;-webkit-text-stroke:.3px #1c1c1c;">Flower</span><div class="a" style="left:573.2px;top:2px;width:49.8px;height:48.6px;border-radius:5px 5px 3px 3px;background:linear-gradient(#9c9c9c 0,#8a8a8a 30%,#6a6a6a 70%,#545454 100%)"></div><div class="a" style="left:578.4px;top:7px;width:40px;height:12px;border-radius:3.5px;background:#5fbfa6;box-shadow:inset 1.2px 1.2px 0.5px rgba(0,0,0,.22),inset -0.5px -0.5px 0.5px rgba(0,0,0,.08)"></div><span class="t" style="left:583.35px;top:25px;font-size:11px;transform:scaleX(0.9910);color:#1c1c1c;-webkit-text-stroke:.3px #1c1c1c;">Bluish</span><span class="t" style="left:583.35px;top:37px;font-size:11px;transform:scaleX(0.9647);color:#1c1c1c;-webkit-text-stroke:.3px #1c1c1c;">Green</span><div class="a" style="left:625.2px;top:2px;width:49.8px;height:48.6px;border-radius:5px 5px 3px 3px;background:linear-gradient(#9c9c9c 0,#8a8a8a 30%,#6a6a6a 70%,#545454 100%)"></div><div class="a" style="left:630.4px;top:7px;width:40px;height:24px;border-radius:3.5px;background:#e17a28;box-shadow:inset 1.2px 1.2px 0.5px rgba(0,0,0,.22),inset -0.5px -0.5px 0.5px rgba(0,0,0,.08)"></div><span class="t" style="left:632.30px;top:37px;font-size:11px;transform:scaleX(0.9754);color:#1c1c1c;-webkit-text-stroke:.3px #1c1c1c;">Orange</span><div class="a" style="left:677.2px;top:2px;width:49.8px;height:48.6px;border-radius:5px 5px 3px 3px;background:linear-gradient(#9c9c9c 0,#8a8a8a 30%,#6a6a6a 70%,#545454 100%)"></div><div class="a" style="left:682.4px;top:7px;width:40px;height:12px;border-radius:3.5px;background:#4a5cae;box-shadow:inset 1.2px 1.2px 0.5px rgba(0,0,0,.22),inset -0.5px -0.5px 0.5px rgba(0,0,0,.08)"></div><span class="t" style="left:682.50px;top:25px;font-size:11px;transform:scaleX(0.9912);color:#1c1c1c;-webkit-text-stroke:.3px #1c1c1c;">Purplish</span><span class="t" style="left:682.50px;top:37px;font-size:11px;transform:scaleX(0.9850);color:#1c1c1c;-webkit-text-stroke:.3px #1c1c1c;">Blue</span><div class="a" style="left:729.2px;top:2px;width:49.8px;height:48.6px;border-radius:5px 5px 3px 3px;background:linear-gradient(#9c9c9c 0,#8a8a8a 30%,#6a6a6a 70%,#545454 100%)"></div><div class="a" style="left:734.4px;top:7px;width:40px;height:12px;border-radius:3.5px;background:#c6505e;box-shadow:inset 1.2px 1.2px 0.5px rgba(0,0,0,.22),inset -0.5px -0.5px 0.5px rgba(0,0,0,.08)"></div><span class="t" style="left:730.20px;top:25px;font-size:11px;transform:scaleX(1.0326);color:#1c1c1c;-webkit-text-stroke:.3px #1c1c1c;">Moderate</span><span class="t" style="left:730.20px;top:37px;font-size:11px;transform:scaleX(0.9065);color:#1c1c1c;-webkit-text-stroke:.3px #1c1c1c;">Red</span><div class="a" style="left:781.2px;top:2px;width:49.8px;height:48.6px;border-radius:5px 5px 3px 3px;background:linear-gradient(#9c9c9c 0,#8a8a8a 30%,#6a6a6a 70%,#545454 100%)"></div><div class="a" style="left:786.4px;top:7px;width:40px;height:24px;border-radius:3.5px;background:#5e3c6e;box-shadow:inset 1.2px 1.2px 0.5px rgba(0,0,0,.22),inset -0.5px -0.5px 0.5px rgba(0,0,0,.08)"></div><span class="t" style="left:790.40px;top:37px;font-size:11px;transform:scaleX(0.9938);color:#1c1c1c;-webkit-text-stroke:.3px #1c1c1c;">Purple</span><div class="a" style="left:833.2px;top:2px;width:49.8px;height:48.6px;border-radius:5px 5px 3px 3px;background:linear-gradient(#9c9c9c 0,#8a8a8a 30%,#6a6a6a 70%,#545454 100%)"></div><div class="a" style="left:838.4px;top:7px;width:40px;height:12px;border-radius:3.5px;background:#a0c040;box-shadow:inset 1.2px 1.2px 0.5px rgba(0,0,0,.22),inset -0.5px -0.5px 0.5px rgba(0,0,0,.08)"></div><span class="t" style="left:842.00px;top:25px;font-size:11px;transform:scaleX(1.0316);color:#1c1c1c;-webkit-text-stroke:.3px #1c1c1c;">Yellow</span><span class="t" style="left:842.00px;top:37px;font-size:11px;transform:scaleX(0.9647);color:#1c1c1c;-webkit-text-stroke:.3px #1c1c1c;">Green</span><div class="a" style="left:885.2px;top:2px;width:49.8px;height:48.6px;border-radius:5px 5px 3px 3px;background:linear-gradient(#9c9c9c 0,#8a8a8a 30%,#6a6a6a 70%,#545454 100%)"></div><div class="a" style="left:890.4px;top:7px;width:40px;height:12px;border-radius:3.5px;background:#e8a030;box-shadow:inset 1.2px 1.2px 0.5px rgba(0,0,0,.22),inset -0.5px -0.5px 0.5px rgba(0,0,0,.08)"></div><span class="t" style="left:892.30px;top:25px;font-size:11px;transform:scaleX(0.9754);color:#1c1c1c;-webkit-text-stroke:.3px #1c1c1c;">Orange</span><span class="t" style="left:892.30px;top:37px;font-size:11px;transform:scaleX(1.0316);color:#1c1c1c;-webkit-text-stroke:.3px #1c1c1c;">Yellow</span><div class="a" style="left:937.2px;top:2px;width:49.8px;height:48.6px;border-radius:5px 5px 3px 3px;background:linear-gradient(#9c9c9c 0,#8a8a8a 30%,#6a6a6a 70%,#545454 100%)"></div><div class="a" style="left:942.4px;top:7px;width:40px;height:24px;border-radius:3.5px;background:#2e3c9c;box-shadow:inset 1.2px 1.2px 0.5px rgba(0,0,0,.22),inset -0.5px -0.5px 0.5px rgba(0,0,0,.08)"></div><span class="t" style="left:951.35px;top:37px;font-size:11px;transform:scaleX(0.9850);color:#1c1c1c;-webkit-text-stroke:.3px #1c1c1c;">Blue</span><div class="a" style="left:989.2px;top:2px;width:49.8px;height:48.6px;border-radius:5px 5px 3px 3px;background:linear-gradient(#9c9c9c 0,#8a8a8a 30%,#6a6a6a 70%,#545454 100%)"></div><div class="a" style="left:994.4px;top:7px;width:40px;height:24px;border-radius:3.5px;background:#449848;box-shadow:inset 1.2px 1.2px 0.5px rgba(0,0,0,.22),inset -0.5px -0.5px 0.5px rgba(0,0,0,.08)"></div><span class="t" style="left:999.45px;top:37px;font-size:11px;transform:scaleX(0.9647);color:#1c1c1c;-webkit-text-stroke:.3px #1c1c1c;">Green</span><div class="a" style="left:1041.2px;top:2px;width:49.8px;height:48.6px;border-radius:5px 5px 3px 3px;background:linear-gradient(#9c9c9c 0,#8a8a8a 30%,#6a6a6a 70%,#545454 100%)"></div><div class="a" style="left:1046.4px;top:7px;width:40px;height:24px;border-radius:3.5px;background:#b02c38;box-shadow:inset 1.2px 1.2px 0.5px rgba(0,0,0,.22),inset -0.5px -0.5px 0.5px rgba(0,0,0,.08)"></div><span class="t" style="left:1057.05px;top:37px;font-size:11px;transform:scaleX(0.9065);color:#1c1c1c;-webkit-text-stroke:.3px #1c1c1c;">Red</span><div class="a" style="left:1093.2px;top:2px;width:49.8px;height:48.6px;border-radius:5px 5px 3px 3px;background:linear-gradient(#9c9c9c 0,#8a8a8a 30%,#6a6a6a 70%,#545454 100%)"></div><div class="a" style="left:1098.4px;top:7px;width:40px;height:24px;border-radius:3.5px;background:#eec820;box-shadow:inset 1.2px 1.2px 0.5px rgba(0,0,0,.22),inset -0.5px -0.5px 0.5px rgba(0,0,0,.08)"></div><span class="t" style="left:1102.00px;top:37px;font-size:11px;transform:scaleX(1.0316);color:#1c1c1c;-webkit-text-stroke:.3px #1c1c1c;">Yellow</span><div class="a" style="left:1145.2px;top:2px;width:49.8px;height:48.6px;border-radius:5px 5px 3px 3px;background:linear-gradient(#9c9c9c 0,#8a8a8a 30%,#6a6a6a 70%,#545454 100%)"></div><div class="a" style="left:1150.4px;top:7px;width:40px;height:24px;border-radius:3.5px;background:#bc5698;box-shadow:inset 1.2px 1.2px 0.5px rgba(0,0,0,.22),inset -0.5px -0.5px 0.5px rgba(0,0,0,.08)"></div><span class="t" style="left:1148.70px;top:37px;font-size:11px;transform:scaleX(1.0044);color:#1c1c1c;-webkit-text-stroke:.3px #1c1c1c;">Magenta</span><div class="a" style="left:1197.2px;top:2px;width:49.8px;height:48.6px;border-radius:5px 5px 3px 3px;background:linear-gradient(#9c9c9c 0,#8a8a8a 30%,#6a6a6a 70%,#545454 100%)"></div><div class="a" style="left:1202.4px;top:7px;width:40px;height:24px;border-radius:3.5px;background:#0088aa;box-shadow:inset 1.2px 1.2px 0.5px rgba(0,0,0,.22),inset -0.5px -0.5px 0.5px rgba(0,0,0,.08)"></div><span class="t" style="left:1210.60px;top:37px;font-size:11px;transform:scaleX(0.9032);color:#1c1c1c;-webkit-text-stroke:.3px #1c1c1c;">Cyan</span><div class="a" style="left:1249.2px;top:2px;width:49.8px;height:48.6px;border-radius:5px 5px 3px 3px;background:linear-gradient(#9c9c9c 0,#8a8a8a 30%,#6a6a6a 70%,#545454 100%)"></div><div class="a" style="left:1254.4px;top:7px;width:40px;height:24px;border-radius:3.5px;background:#ff0000;box-shadow:inset 1.2px 1.2px 0.5px rgba(0,0,0,.22),inset -0.5px -0.5px 0.5px rgba(0,0,0,.08)"></div><span class="t" style="left:1249.60px;top:37px;font-size:11px;transform:scaleX(0.8954);color:#1c1c1c;-webkit-text-stroke:.3px #1c1c1c;">100% Red</span><div class="a" style="left:0;top:51.2px;width:1277px;height:12.8px;background:linear-gradient(#5a5a5a 0,#5a5a5a 8%,#444 9%,#444 88%,#585858 92%,#3a3a3a 100%)"></div><div class="a" style="left:14px;top:52.5px;width:1020px;height:11px;border-radius:5.5px;background:#3b3b3b;box-shadow:0 0 0 .6px #505050"></div><div class="a" style="left:2px;top:52.5px;width:10px;height:11px;border-radius:2px;background:#7a7a7a"></div><svg class="a" style="left:4.5px;top:54.5px" width="5" height="7" viewBox="0 0 5 7"><path d="M4.8 0.2L0.3 3.5L4.8 6.8z" fill="#4a4a4a"/></svg><div class="a" style="left:1265px;top:52.5px;width:10.5px;height:11px;border-radius:2px;background:#7a7a7a"></div><svg class="a" style="left:1268.5px;top:54.5px" width="5" height="7" viewBox="0 0 5 7"><path d="M0.3 0.2L4.8 3.5L0.3 6.8z" fill="#4a4a4a"/></svg></div>
<div style="left:1276.6px;top:806px;width:324px;height:64px;background:#2e2e2e;"></div>
<div style="left:1277.3px;top:808px;width:47.7px;height:18px;border-radius:5px 5px 0 0;background:linear-gradient(#a9a9a9 0,#8e8e8e 45%,#666 100%);"></div>
<div style="left:1293.8px;top:809.7px;width:15px;height:15px;border-radius:50%;background:linear-gradient(#6c6c6c,#a0a0a0);"></div>
<svg class="a" style="left:1296.8px;top:814px" width="9" height="4.6" viewBox="0 0 9 4.6"><path d="M4.5 0.1L8.9 4.5H0.1z" fill="#333"/></svg>
<div style="left:1277.3px;top:827px;width:47.7px;height:42.3px;border-radius:0 0 5px 5px;background:linear-gradient(#9a9a9a 0,#7c7c7c 50%,#5a5a5a 100%);"></div>
<div style="left:1285.3px;top:832.3px;width:31.4px;height:31.6px;border-radius:5px;border:2.2px solid #2c2c2c;box-sizing:border-box;background:linear-gradient(#b4b4b4 0,#a4a4a4 50%,#8a8a8a 50%,#949494 100%);"></div>
<div style="left:1294px;top:841.2px;width:14px;height:14px;background:linear-gradient(#1e1e1e 0,#1a1a1a 50%,#000 50%,#000 100%);"></div>
<div style="left:1326px;top:808px;width:46px;height:30.3px;border-radius:5px 0 0 0;background:linear-gradient(#a9a9a9 0,#8e8e8e 45%,#666 100%);"></div>
<div style="left:1339px;top:813.2px;width:20px;height:20px;border-radius:50%;background:linear-gradient(#6e6e6e,#a6a6a6);"></div>
<div style="left:1373px;top:808px;width:44px;height:30.3px;border-radius:0;background:linear-gradient(#a9a9a9 0,#8e8e8e 45%,#666 100%);"></div>
<div style="left:1385px;top:813.2px;width:20px;height:20px;border-radius:50%;background:linear-gradient(#6e6e6e,#a6a6a6);"></div>
<div style="left:1418px;top:808px;width:44px;height:30.3px;border-radius:0;background:linear-gradient(#a9a9a9 0,#8e8e8e 45%,#666 100%);"></div>
<div style="left:1430px;top:813.2px;width:20px;height:20px;border-radius:50%;background:linear-gradient(#6e6e6e,#a6a6a6);"></div>
<div style="left:1463px;top:808px;width:43.5px;height:30.3px;border-radius:0;background:linear-gradient(#a9a9a9 0,#8e8e8e 45%,#666 100%);"></div>
<div style="left:1474.75px;top:813.2px;width:20px;height:20px;border-radius:50%;background:linear-gradient(#6e6e6e,#a6a6a6);"></div>
<div style="left:1507.5px;top:808px;width:44.5px;height:30.3px;border-radius:0;background:linear-gradient(#4a4a4a 0,#333 60%,#262626 100%);"></div>
<div style="left:1519.75px;top:813.2px;width:20px;height:20px;border-radius:50%;background:linear-gradient(#2c2c2c,#3c3c3c);"></div>
<div style="left:1553px;top:808px;width:44.6px;height:30.3px;border-radius:0 5px 0 0;background:linear-gradient(#4a4a4a 0,#333 60%,#262626 100%);"></div>
<div style="left:1565.3px;top:813.2px;width:20px;height:20px;border-radius:50%;background:linear-gradient(#2c2c2c,#3c3c3c);"></div>
<div style="left:1345px;top:819.2px;width:8px;height:8px;background:#2a2a2a;"></div>
<svg class="a" style="left:1391.8px;top:818.2px" width="9" height="10" viewBox="0 0 9 10"><path d="M0.3 0.2L8.7 5L0.3 9.8z" fill="#2a2a2a"/></svg>
<svg class="a" style="left:1434px;top:818px" width="12" height="11" viewBox="0 0 12 11" fill="none" stroke="#2a2a2a" stroke-width="1.6"><path d="M3.2 0.8H0.9V10.2H3.2"/><path d="M8.8 0.8H11.1V10.2H8.8"/><path d="M3.6 5.5h1.6M6.8 5.5h1.6" stroke-width="1.4"/></svg>
<svg class="a" style="left:1478px;top:819.6px" width="14" height="7" viewBox="0 0 14 7" fill="none" stroke="#2a2a2a" stroke-width="1.5"><path d="M7 3.5C5.6 1.4 4.6 0.9 3.5 0.9A2.6 2.6 0 0 0 3.5 6.1C4.6 6.1 5.6 5.6 7 3.5C8.4 1.4 9.4 0.9 10.5 0.9A2.6 2.6 0 0 1 10.5 6.1C9.4 6.1 8.4 5.6 7 3.5Z"/></svg>
<svg class="a" style="left:1524px;top:817.2px" width="12" height="12" viewBox="0 0 12 12" fill="none" stroke="#1a1a1a" stroke-width="2"><path d="M1.6 5.2A4.5 4.5 0 0 1 9.6 3.2"/><path d="M10.4 6.8A4.5 4.5 0 0 1 2.4 8.8"/><path d="M10.6 0.6v3.2h-3.2z" fill="#1a1a1a" stroke="none"/><path d="M1.4 11.4v-3.2h3.2z" fill="#1a1a1a" stroke="none"/></svg>
<div style="left:1326px;top:839px;width:136px;height:30.3px;border-radius:5px 0 0 5px;background:linear-gradient(#a9a9a9 0,#8e8e8e 45%,#666 100%);"></div>
<div style="left:1463px;top:839px;width:135.6px;height:30.3px;border-radius:0 5px 5px 0;background:linear-gradient(#a9a9a9 0,#8e8e8e 45%,#666 100%);"></div>
<div style="left:1347px;top:844.2px;width:20px;height:20px;border-radius:50%;background:linear-gradient(#6e6e6e,#a6a6a6);"></div>
<div style="left:1560px;top:844.2px;width:20px;height:20px;border-radius:50%;background:linear-gradient(#6e6e6e,#a6a6a6);"></div>
<svg class="a" style="left:1351.5px;top:849.2px" width="10" height="10" viewBox="0 0 10 10" fill="none" stroke="#2a2a2a" stroke-width="1.2"><path d="M4.8 0.6L0.8 5L4.8 9.4"/><path d="M9 0.6L5 5L9 9.4"/></svg>
<svg class="a" style="left:1565.5px;top:849.2px" width="10" height="10" viewBox="0 0 10 10" fill="none" stroke="#2a2a2a" stroke-width="1.2"><path d="M1 0.6L5 5L1 9.4"/><path d="M5.2 0.6L9.2 5L5.2 9.4"/></svg>
<span class="t" style="left:1383.80px;top:843px;font-size:22.75px;color:#2a2a2a;-webkit-text-stroke:.7px #2a2a2a;">Back</span>
<span class="t" style="left:1491.00px;top:843px;font-size:22.75px;transform:scaleX(1.0902);color:#2a2a2a;-webkit-text-stroke:.7px #2a2a2a;">Next</span>
</div>
</body></html>
